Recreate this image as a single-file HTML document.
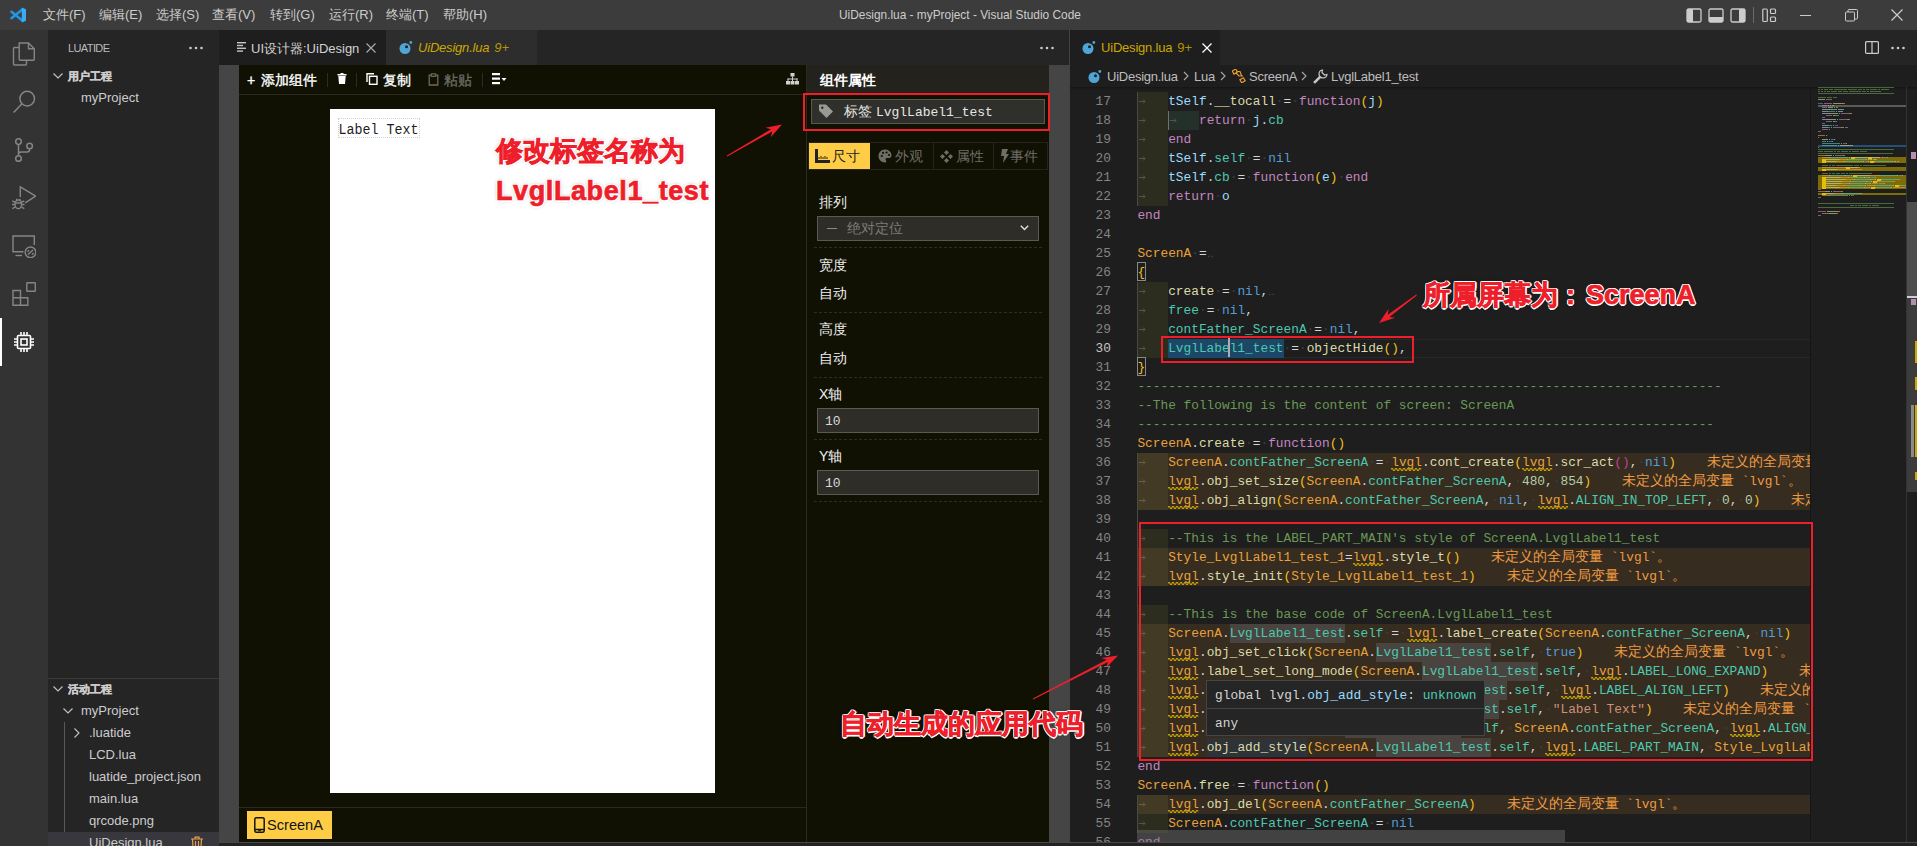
<!DOCTYPE html>
<html><head><meta charset="utf-8">
<style>
*{box-sizing:border-box;margin:0;padding:0}
html,body{width:1917px;height:846px;overflow:hidden;background:#1e1e1e;font-family:"Liberation Sans",sans-serif;font-size:13px;color:#ccc}
.a{position:absolute}
.mono{font-family:"Liberation Mono",monospace}
#title{left:0;top:0;width:1917px;height:30px;background:#3c3c3c}
#act{left:0;top:30px;width:48px;height:816px;background:#333333}
#side{left:48px;top:30px;width:171px;height:816px;background:#252526;overflow:hidden}
#ltabs{left:219px;top:30px;width:850px;height:35px;background:#252526}
#rtabs{left:1070px;top:30px;width:847px;height:35px;background:#252526}
#lstrip{left:219px;top:65px;width:20px;height:781px;background:#454545}
#web{left:239px;top:65px;width:810px;height:777px;background:#101103}
#rstrip{left:1049px;top:65px;width:20px;height:781px;background:#454545}
#divid{left:1069px;top:30px;width:1px;height:816px;background:#444}
#editor{left:1070px;top:65px;width:847px;height:781px;background:#1e1e1e;overflow:hidden}
#bottom{left:219px;top:842px;width:1698px;height:4px;background:#232323;border-top:1px solid #474747}
.menu{top:0;line-height:30px;font-size:13px;color:#cccccc;white-space:nowrap}
.sb{white-space:nowrap}
.sbh{font-size:11px;font-weight:bold;color:#cccccc;-webkit-text-stroke:0.3px #cccccc;line-height:14px;white-space:nowrap}
.sbi{font-size:13px;color:#cccccc;line-height:16px;white-space:nowrap}
.tabt{line-height:35px;font-size:13px;white-space:nowrap}
.wtb{font-size:14px;line-height:16px;white-space:nowrap;-webkit-text-stroke:0.35px currentColor}
.ptab{top:78px;line-height:26px;font-size:14px;white-space:nowrap}
.plab{margin-top:1px;font-size:14px;font-weight:500;color:#f0f0f0;line-height:16px;white-space:nowrap}
.pval{margin-top:1px;font-size:14px;color:#f0f0f0;line-height:16px;white-space:nowrap}
.dash{left:575px;width:228px;height:1px;border-top:1px dashed #2e2d22}
.bc{top:1px;line-height:22px;font-size:13px;color:#bdbdbd;white-space:nowrap;letter-spacing:-0.25px}
.cl{font-family:"Liberation Mono",monospace;font-size:12.825px;line-height:19px;white-space:pre}
.wt{color:#ee9a40}
.cj{font-size:14px}
.ln{left:0;width:41px;text-align:right;font-family:"Liberation Mono",monospace;font-size:12.825px;line-height:19px}
.anno{font-family:"Liberation Sans",sans-serif;font-weight:bold;-webkit-text-stroke:0.7px #ee1f2b;font-size:27px;line-height:36px;color:#ee1f2b;white-space:nowrap;text-shadow:1.5px 0 0 #fff,-1.5px 0 0 #fff,0 1.5px 0 #fff,0 -1.5px 0 #fff,1px 1px 0 #fff,-1px -1px 0 #fff,1px -1px 0 #fff,-1px 1px 0 #fff,0 0 4px rgba(0,0,0,0.35)}
.rbox{border:2px solid #f01e28}
</style></head><body>
<div class="a" id="lstrip"></div>
<div class="a" id="rstrip"></div>
<div class="a" id="divid"></div>
<!-- TITLE BAR -->
<div class="a" id="title">
 <svg class="a" style="left:10px;top:7px" width="17" height="16" viewBox="0 0 17 16"><path d="M12.6 2.2 L1.5 11.2 M12.6 13.8 L1.5 4.8" stroke="#2196e6" stroke-width="2.5" stroke-linecap="round"/><path d="M11.8 0.4 L16 2.2 V13.8 L11.8 15.6 Z" fill="#3aaaf2"/></svg>
 <div class="a menu" style="left:43px">文件(F)</div>
 <div class="a menu" style="left:99px">编辑(E)</div>
 <div class="a menu" style="left:156px">选择(S)</div>
 <div class="a menu" style="left:212px">查看(V)</div>
 <div class="a menu" style="left:270px">转到(G)</div>
 <div class="a menu" style="left:329px">运行(R)</div>
 <div class="a menu" style="left:386px">终端(T)</div>
 <div class="a menu" style="left:443px">帮助(H)</div>
 <div class="a menu" id="wtitle" style="left:839px;transform:scaleX(0.913);transform-origin:0 0">UiDesign.lua - myProject - Visual Studio Code</div>
 <svg class="a" style="left:1686px;top:8px" width="16" height="15" viewBox="0 0 16 15"><rect x="1" y="1" width="14" height="13" rx="1.5" fill="none" stroke="#cccccc" stroke-width="1.3"/><rect x="1" y="1" width="6" height="13" fill="#cccccc"/></svg>
 <svg class="a" style="left:1708px;top:8px" width="16" height="15" viewBox="0 0 16 15"><rect x="1" y="1" width="14" height="13" rx="1.5" fill="none" stroke="#cccccc" stroke-width="1.3"/><rect x="1" y="9" width="14" height="5" fill="#cccccc"/></svg>
 <svg class="a" style="left:1730px;top:8px" width="16" height="15" viewBox="0 0 16 15"><rect x="1" y="1" width="14" height="13" rx="1.5" fill="none" stroke="#cccccc" stroke-width="1.3"/><rect x="9" y="1" width="6" height="13" fill="#cccccc"/></svg>
 <div class="a" style="left:1753px;top:7px;width:1px;height:16px;background:#6a6a6a"></div>
 <svg class="a" style="left:1762px;top:8px" width="15" height="15" viewBox="0 0 15 15" fill="none" stroke="#cccccc" stroke-width="1.2"><rect x="0.8" y="1" width="4.5" height="12.5" rx="1"/><rect x="8.5" y="1" width="5" height="4.5" rx="1"/><rect x="8.5" y="9" width="5" height="4.5" rx="1"/></svg>
 <div class="a" style="left:1800px;top:15px;width:11px;height:1px;background:#cccccc"></div>
 <svg class="a" style="left:1845px;top:9px" width="13" height="13" viewBox="0 0 13 13" fill="none" stroke="#cccccc" stroke-width="1"><rect x="0.5" y="3" width="9" height="9" rx="1"/><path d="M3 3 V1.5 a1 1 0 0 1 1 -1 H11.5 a1 1 0 0 1 1 1 V9 a1 1 0 0 1 -1 1 H9.5"/></svg>
 <svg class="a" style="left:1891px;top:9px" width="12" height="12" viewBox="0 0 12 12" stroke="#cccccc" stroke-width="1.2"><path d="M0.5 0.5 L11.5 11.5 M11.5 0.5 L0.5 11.5"/></svg>
</div>

<!-- ACTIVITY BAR -->
<div class="a" id="act">
 <svg class="a" style="left:12px;top:12px" width="24" height="24" viewBox="0 0 24 24" fill="none" stroke="#858585" stroke-width="1.4"><path d="M7 5.5 H2.5 a1 1 0 0 0 -1 1 V22 a1 1 0 0 0 1 1 H13.5 a1 1 0 0 0 1 -1 V18.5"/><path d="M7.2 1 H16.5 L22.3 6.8 V17.3 a1 1 0 0 1 -1 1 H8.2 a1 1 0 0 1 -1 -1 Z"/><path d="M16.5 1 V6.8 H22.3"/></svg>
 <svg class="a" style="left:12px;top:60px" width="24" height="24" viewBox="0 0 24 24" fill="none" stroke="#858585" stroke-width="1.5"><circle cx="15.2" cy="8.6" r="7.3"/><path d="M10 13.8 L1.6 22.6"/></svg>
 <svg class="a" style="left:12px;top:108px" width="24" height="24" viewBox="0 0 24 24" fill="none" stroke="#858585" stroke-width="1.5"><circle cx="6.5" cy="3.6" r="2.8"/><circle cx="6.5" cy="20.5" r="2.8"/><circle cx="17.6" cy="8" r="2.8"/><path d="M6.5 6.4 V17.7 M17.6 10.8 V11.5 a2.5 2.5 0 0 1 -2.5 2.5 H9 a2.5 2.5 0 0 0 -2.5 2.5"/></svg>
 <svg class="a" style="left:12px;top:156px" width="24" height="24" viewBox="0 0 24 24" fill="none" stroke="#858585" stroke-width="1.4"><path d="M8.3 11 V0.8 L23.6 10.2 L13.2 16.8"/><ellipse cx="6.3" cy="18.3" rx="3.3" ry="4.3"/><path d="M0.3 15 L3 16.2 M0.3 22.6 L3 21.2 M12.3 15 L9.6 16.2 M12.3 22.6 L9.6 21.2 M0 18.5 H3 M9.6 18.5 H12.6 M4.3 12.8 L5.3 14.3 M8.3 12.8 L7.3 14.3 M3.4 17 H9.2"/></svg>
 <svg class="a" style="left:12px;top:204px" width="24" height="24" viewBox="0 0 24 24" fill="none" stroke="#858585" stroke-width="1.4"><path d="M11.5 17.8 H1 V2 H22.3 V11"/><path d="M3.5 21.5 H10"/><circle cx="18.5" cy="18.3" r="5.3"/><path d="M16 20.5 L21 16 M15.5 17.8 L17 16.3 M21.5 19 L20 20.5"/></svg>
 <svg class="a" style="left:12px;top:252px" width="24" height="24" viewBox="0 0 24 24" fill="none" stroke="#858585" stroke-width="1.4"><path d="M1 8.5 H8.5 V15.8 H15.8 V23.3 H1 Z M1 15.8 H8.5 V23.3"/><rect x="14.8" y="0.8" width="8.5" height="8.5" rx="0.5"/></svg>
 <div class="a" style="left:0;top:288px;width:2px;height:48px;background:#ffffff"></div>
 <svg class="a" style="left:12px;top:300px" width="24" height="24" viewBox="0 0 24 24" fill="none" stroke="#ffffff" stroke-width="1.6"><rect x="5.5" y="5.5" width="13" height="13" rx="1"/><rect x="9" y="9" width="6" height="6"/><path d="M9 2 V5.5 M12 2 V5.5 M15 2 V5.5 M9 18.5 V22 M12 18.5 V22 M15 18.5 V22 M2 9 H5.5 M2 12 H5.5 M2 15 H5.5 M18.5 9 H22 M18.5 12 H22 M18.5 15 H22"/></svg>
</div>

<!-- SIDEBAR -->
<div class="a" id="side">
 <div class="a sb" style="left:20px;top:12px;font-size:11px;color:#bbbbbb;letter-spacing:-0.6px;line-height:13px">LUATIDE</div>
 <svg class="a" style="left:141px;top:16px" width="14" height="4" viewBox="0 0 14 4" fill="#cccccc"><circle cx="1.5" cy="2" r="1.3"/><circle cx="7" cy="2" r="1.3"/><circle cx="12.5" cy="2" r="1.3"/></svg>
 <svg class="a chev" style="left:5px;top:41px" width="10" height="10" viewBox="0 0 10 10"><path d="M0.5 2.5 L5 7 L9.5 2.5" fill="none" stroke="#c5c5c5" stroke-width="1.1"/></svg>
 <div class="a sbh" style="left:20px;top:39px">用户工程</div>
 <div class="a sbi" style="left:33px;top:60px">myProject</div>

 <div class="a" style="left:0;top:648px;width:171px;height:1px;background:#3c3c3c"></div>
 <svg class="a chev" style="left:5px;top:654px" width="10" height="10" viewBox="0 0 10 10"><path d="M0.5 2.5 L5 7 L9.5 2.5" fill="none" stroke="#c5c5c5" stroke-width="1.1"/></svg>
 <div class="a sbh" style="left:20px;top:652px">活动工程</div>
 <svg class="a chev" style="left:15px;top:676px" width="10" height="10" viewBox="0 0 10 10"><path d="M0.5 2.5 L5 7 L9.5 2.5" fill="none" stroke="#c5c5c5" stroke-width="1.1"/></svg>
 <div class="a sbi" style="left:33px;top:673px">myProject</div>
 <div class="a" style="left:16px;top:692px;width:1px;height:130px;background:#585858"></div><div class="a" style="left:16px;top:824px;width:1px;height:30px;background:#5d5d62"></div>
 <svg class="a chev" style="left:24px;top:698px" width="10" height="10" viewBox="0 0 10 10"><path d="M2.5 0.5 L7 5 L2.5 9.5" fill="none" stroke="#c5c5c5" stroke-width="1.1"/></svg>
 <div class="a sbi" style="left:41px;top:695px">.luatide</div>
 <div class="a sbi" style="left:41px;top:717px">LCD.lua</div>
 <div class="a sbi" style="left:41px;top:739px">luatide_project.json</div>
 <div class="a sbi" style="left:41px;top:761px">main.lua</div>
 <div class="a sbi" style="left:41px;top:783px">qrcode.png</div>
 <div class="a" style="left:0;top:802px;width:171px;height:22px;background:#37373d"></div>
 <div class="a sbi" style="left:41px;top:805px">UiDesign.lua</div>
 <svg class="a" style="left:142px;top:806px" width="14" height="14" viewBox="0 0 14 14" fill="none" stroke="#e8a050" stroke-width="1.2"><path d="M1 3 H13 M5 3 V1.2 H9 V3 M2.5 3 L3.2 14 M11.5 3 L10.8 14 M5.5 5 V14 M8.5 5 V14"/></svg>
</div>
<!-- LEFT TABS -->
<div class="a" id="ltabs">
 <div class="a" style="left:0;top:0;width:167px;height:35px;background:#1e1e1e"></div>
 <svg class="a" style="left:18px;top:12px" width="10" height="10" viewBox="0 0 10 10" fill="#c5c5c5"><rect x="0" y="0" width="9" height="1.4"/><rect x="0" y="2.8" width="6" height="1.4"/><rect x="0" y="5.6" width="9" height="1.4"/><rect x="0" y="8.4" width="6" height="1.4"/></svg>
 <div class="a tabt" style="left:32px;top:1px;color:#d2d2d2">UI设计器:UiDesign</div>
 <svg class="a" style="left:147px;top:13px" width="10" height="10" viewBox="0 0 10 10" stroke="#a8a8a8" stroke-width="1.2"><path d="M0.5 0.5 L9.5 9.5 M9.5 0.5 L0.5 9.5"/></svg>
 <div class="a" style="left:167px;top:0;width:151px;height:35px;background:#2d2d2d"></div>
 <svg class="a" style="left:180px;top:11px" width="14" height="13" viewBox="0 0 14 13"><circle cx="6" cy="7.5" r="5.5" fill="#4fa5d6"/><circle cx="7.5" cy="5.8" r="1.5" fill="#1e1e1e"/><circle cx="11.8" cy="1.5" r="1.4" fill="#4fa5d6"/></svg>
 <div class="a tabt" style="left:199px;top:0;color:#cca700;font-style:italic"><span style="letter-spacing:-0.2px">UiDesign.lua</span><span style="margin-left:5px;opacity:0.85">9+</span></div>
 <svg class="a" style="left:821px;top:16px" width="14" height="4" viewBox="0 0 14 4" fill="#cccccc"><circle cx="1.5" cy="2" r="1.3"/><circle cx="7" cy="2" r="1.3"/><circle cx="12.5" cy="2" r="1.3"/></svg>
</div>

<!-- WEBVIEW -->
<div class="a" id="web">
 <!-- toolbar -->
 <div class="a" style="left:0;top:29px;width:567px;height:1px;background:#2b2a20"></div>
 <div class="a wtb" style="left:8px;top:7px;color:#fff">+</div>
 <div class="a wtb" style="left:22px;top:7px;color:#fff">添加组件</div>
 <div class="a" style="left:88px;top:8px;width:1px;height:14px;background:#2e2d25"></div>
 <svg class="a" style="left:98px;top:8px" width="10" height="11" viewBox="0 0 10 11" fill="#ffffff"><rect x="0.5" y="1" width="9" height="1.5"/><rect x="3.5" y="0" width="3" height="1.5"/><path d="M1.3 3 H8.7 L8 11 H2 Z"/></svg>
 <div class="a" style="left:117px;top:8px;width:1px;height:14px;background:#2e2d25"></div>
 <svg class="a" style="left:127px;top:8px" width="12" height="12" viewBox="0 0 12 12" fill="none" stroke="#ffffff" stroke-width="1.4"><path d="M1 9 V0.8 H8"/><rect x="3.5" y="3.3" width="7.5" height="8"/></svg>
 <div class="a wtb" style="left:144px;top:7px;color:#fff">复制</div>
 <svg class="a" style="left:189px;top:8px" width="11" height="13" viewBox="0 0 11 13" fill="none" stroke="#6b6b60" stroke-width="1.3"><path d="M3 2.2 H1.2 V12 H9.8 V2.2 H8"/><rect x="3.2" y="0.8" width="4.6" height="2.6" rx="0.6"/></svg>
 <div class="a wtb" style="left:205px;top:7px;color:#6b6b60">粘贴</div>
 <div class="a" style="left:243px;top:8px;width:1px;height:14px;background:#2e2d25"></div>
 <svg class="a" style="left:253px;top:8px" width="15" height="12" viewBox="0 0 15 12" fill="#ffffff"><rect x="0" y="0" width="8" height="2.2"/><rect x="0" y="4.5" width="8" height="2.2"/><rect x="0" y="9" width="8" height="2.2"/><path d="M9.5 5 H14.5 L12 8 Z"/></svg>
 <svg class="a" style="left:547px;top:8px" width="13" height="12" viewBox="0 0 13 12" fill="#d0d0d0"><rect x="4.5" y="0" width="4" height="3.5"/><rect x="6" y="3.5" width="1" height="2.5"/><rect x="1.5" y="5.5" width="10" height="1"/><rect x="1.5" y="5.5" width="1" height="2.5"/><rect x="10.5" y="5.5" width="1" height="2.5"/><rect x="6" y="5.5" width="1" height="2.5"/><rect x="0" y="8" width="4" height="3.5"/><rect x="4.5" y="8" width="4" height="3.5"/><rect x="9" y="8" width="4" height="3.5"/></svg>
 <!-- canvas -->
 <div class="a" style="left:91px;top:44px;width:385px;height:684px;background:#ffffff"></div>
 <div class="a" style="left:99px;top:53px;width:82px;height:20px;border:1px dotted #cfcfcf"></div>
 <div class="a mono" style="left:99.5px;top:59px;font-size:13.35px;color:#1e1e1e;line-height:16px;transform:scaleY(1.15);transform-origin:0 100%">Label Text</div>
 <!-- bottom bar -->
 <div class="a" style="left:0;top:742px;width:567px;height:1px;background:#2b2a20"></div>
 <div class="a" style="left:8px;top:746px;width:85px;height:28px;background:#fecd45"></div>
 <svg class="a" style="left:15px;top:752px" width="11" height="16" viewBox="0 0 11 16" fill="none" stroke="#141414" stroke-width="1.5"><rect x="0.8" y="0.8" width="9.4" height="14.4" rx="1.5"/><path d="M0.8 12.5 H10.2" /><rect x="4" y="13.2" width="3" height="1" fill="#141414" stroke="none"/></svg>
 <div class="a" style="left:28px;top:746px;line-height:28px;font-size:14.6px;color:#141414">ScreenA</div>

 <!-- properties panel -->
 <div class="a" style="left:567px;top:0;width:1px;height:777px;background:#2b2a20"></div>
 <div class="a" style="left:568px;top:0;width:242px;height:29px;background:#23221c"></div>
 <div class="a wtb" style="left:581px;top:7px;color:#fff;font-weight:bold;-webkit-text-stroke:0">组件属性</div>
 <div class="a" style="left:572px;top:34px;width:234px;height:25px;background:#2f2f2b;border:1px solid #58584f"></div>
 <svg class="a" style="left:579px;top:38px" width="16" height="16" viewBox="0 0 16 16" fill="#9a9a95"><path d="M1 1.5 H8 L15 8.5 L8.5 15 L1 7.5 Z"/><circle cx="4.3" cy="4.8" r="1.3" fill="#2f2f2b"/></svg>
 <div class="a" style="left:605px;top:34px;line-height:25px;font-size:14px;color:#e6e6e6">标签 <span class="mono" style="font-size:13px">LvglLabel1_test</span></div>
 <!-- tabs -->
 <div class="a" style="left:569px;top:77px;width:240px;height:28px;border:1px solid #25241c"></div>
 <div class="a" style="left:570px;top:78px;width:61px;height:26px;background:#fecd45"></div>
 <div class="a" style="left:694px;top:78px;width:1px;height:26px;background:#25241c"></div>
 <div class="a" style="left:754px;top:78px;width:1px;height:26px;background:#25241c"></div>
 <svg class="a" style="left:576px;top:84px" width="15" height="14" viewBox="0 0 15 14" fill="#222"><path d="M0 0 H3 V11 H15 V14 H0 Z"/><path d="M4 10 V8 M6 10 V7 M8 10 V8 M10 10 V7 M12 10 V8" stroke="#222" stroke-width="1"/></svg>
 <div class="a ptab" style="left:593px;color:#222">尺寸</div>
 <svg class="a" style="left:639px;top:84px" width="14" height="14" viewBox="0 0 14 14" fill="#6e6e66"><path d="M7 0.5 C3 0.5 0.5 3.5 0.5 7 C0.5 10.5 3 13.5 7 13.5 C8.5 13.5 8.5 12 7.8 11 C7 10 7.8 9 9 9 H11 C12.5 9 13.5 8 13.5 6.5 C13.5 3 10.5 0.5 7 0.5 Z"/><circle cx="3.8" cy="7" r="1.1" fill="#0f0f06"/><circle cx="5" cy="3.8" r="1.1" fill="#0f0f06"/><circle cx="8.5" cy="3.5" r="1.1" fill="#0f0f06"/><circle cx="11" cy="6" r="1.1" fill="#0f0f06"/></svg>
 <div class="a ptab" style="left:656px;color:#6e6e66">外观</div>
 <svg class="a" style="left:701px;top:85px" width="13" height="13" viewBox="0 0 13 13" fill="#6e6e66"><path d="M6.5 0 L9 2.5 L6.5 5 L4 2.5 Z M6.5 8 L9 10.5 L6.5 13 L4 10.5 Z M0 6.5 L2.5 4 L5 6.5 L2.5 9 Z M8 6.5 L10.5 4 L13 6.5 L10.5 9 Z"/></svg>
 <div class="a ptab" style="left:717px;color:#6e6e66">属性</div>
 <svg class="a" style="left:761px;top:84px" width="10" height="14" viewBox="0 0 10 14" fill="#6e6e66"><path d="M2 0 H8 L6 5 H9 L3 14 L4 7 H1 Z"/></svg>
 <div class="a ptab" style="left:771px;color:#6e6e66">事件</div>
 <!-- fields -->
 <div class="a plab" style="left:580px;top:128px">排列</div>
 <div class="a" style="left:578px;top:151px;width:222px;height:25px;background:#2e2d28;border:1px solid #5a5a55"></div>
 <div class="a" style="left:588px;top:163px;width:10px;height:1px;background:#8a8a85"></div>
 <div class="a" style="left:608px;top:151px;line-height:25px;font-size:14px;color:#7c7c77">绝对定位</div>
 <svg class="a" style="left:781px;top:160px" width="9" height="6" viewBox="0 0 9 6"><path d="M0.8 0.8 L4.5 4.5 L8.2 0.8" fill="none" stroke="#dddddd" stroke-width="1.5"/></svg>
 <div class="a dash" style="top:182px"></div>
 <div class="a plab" style="left:580px;top:191px">宽度</div>
 <div class="a pval" style="left:580px;top:219px">自动</div>
 <div class="a dash" style="top:247px"></div>
 <div class="a plab" style="left:580px;top:255px">高度</div>
 <div class="a pval" style="left:580px;top:284px">自动</div>
 <div class="a dash" style="top:312px"></div>
 <div class="a plab" style="left:580px;top:320px">X轴</div>
 <div class="a" style="left:578px;top:343px;width:222px;height:25px;background:#2e2d28;border:1px solid #5a5a55"></div>
 <div class="a mono" style="left:586px;top:344px;line-height:25px;font-size:13px;color:#d8d8d8">10</div>
 <div class="a dash" style="top:374px"></div>
 <div class="a plab" style="left:580px;top:382px">Y轴</div>
 <div class="a" style="left:578px;top:405px;width:222px;height:25px;background:#2e2d28;border:1px solid #5a5a55"></div>
 <div class="a mono" style="left:586px;top:406px;line-height:25px;font-size:13px;color:#d8d8d8">10</div>
 <div class="a dash" style="top:436px"></div>
</div>
<!-- RIGHT TABS -->
<div class="a" id="rtabs">
 <div class="a" style="left:0;top:0;width:150px;height:35px;background:#1e1e1e"></div>
 <svg class="a" style="left:12px;top:11px" width="14" height="13" viewBox="0 0 14 13"><circle cx="6" cy="7.5" r="5.5" fill="#4fa5d6"/><circle cx="7.5" cy="5.8" r="1.5" fill="#1e1e1e"/><circle cx="11.8" cy="1.5" r="1.4" fill="#4fa5d6"/></svg>
 <div class="a tabt" style="left:31px;top:0;color:#cca700"><span style="letter-spacing:-0.2px">UiDesign.lua</span><span style="margin-left:5px;opacity:0.85">9+</span></div>
 <svg class="a" style="left:132px;top:13px" width="10" height="10" viewBox="0 0 10 10" stroke="#ffffff" stroke-width="1.3"><path d="M0.5 0.5 L9.5 9.5 M9.5 0.5 L0.5 9.5"/></svg>
 <svg class="a" style="left:795px;top:11px" width="14" height="13" viewBox="0 0 14 13" fill="none" stroke="#cccccc" stroke-width="1.2"><rect x="0.6" y="0.6" width="12.8" height="11.8" rx="1"/><path d="M7 0.6 V12.4"/></svg>
 <svg class="a" style="left:821px;top:16px" width="14" height="4" viewBox="0 0 14 4" fill="#cccccc"><circle cx="1.5" cy="2" r="1.3"/><circle cx="7" cy="2" r="1.3"/><circle cx="12.5" cy="2" r="1.3"/></svg>
</div>

<!-- EDITOR -->
<div class="a" id="editor">
 <!-- breadcrumbs -->
 <svg class="a" style="left:18px;top:5px" width="14" height="13" viewBox="0 0 14 13"><circle cx="6" cy="7.5" r="5.5" fill="#4fa5d6"/><circle cx="7.5" cy="5.8" r="1.5" fill="#1e1e1e"/><circle cx="11.8" cy="1.5" r="1.4" fill="#4fa5d6"/></svg>
 <div class="a bc" style="left:37px">UiDesign.lua</div>
 <svg class="a" style="left:113px;top:6px" width="6" height="10" viewBox="0 0 6 10"><path d="M1 1 L5 5 L1 9" fill="none" stroke="#a9a9a9" stroke-width="1.1"/></svg>
 <div class="a bc" style="left:124px">Lua</div>
 <svg class="a" style="left:150px;top:6px" width="6" height="10" viewBox="0 0 6 10"><path d="M1 1 L5 5 L1 9" fill="none" stroke="#a9a9a9" stroke-width="1.1"/></svg>
 <svg class="a" style="left:162px;top:4px" width="14" height="14" viewBox="0 0 14 14" fill="none" stroke="#ee9d28" stroke-width="1.2"><rect x="0.8" y="0.8" width="4" height="3.5" transform="rotate(-30 2.8 2.5)"/><rect x="8.5" y="9.5" width="4" height="3.5" transform="rotate(-30 10.5 11.2)"/><path d="M4 4 L7 7 H11 M4.5 2.5 H8 L9.5 6.5"/></svg>
 <div class="a bc" style="left:179px">ScreenA</div>
 <svg class="a" style="left:231px;top:6px" width="6" height="10" viewBox="0 0 6 10"><path d="M1 1 L5 5 L1 9" fill="none" stroke="#a9a9a9" stroke-width="1.1"/></svg>
 <svg class="a" style="left:243px;top:4px" width="15" height="15" viewBox="0 0 15 15" fill="none" stroke="#c5c5c5" stroke-width="1.2"><path d="M1.5 13.5 L7 8 M9.5 1 A4 4 0 1 0 14 5.5 L11.5 6 L9 3.5 Z"/><path d="M1 13 L2 14 L7.5 8.5 L6.5 7.5 Z"/></svg>
 <div class="a bc" style="left:261px">LvglLabel1_test</div>
 <div class="a" style="left:0;top:22px;width:847px;height:3px;background:linear-gradient(#141414,rgba(30,30,30,0))"></div>
 <!-- indent guide -->
 
 <!-- code -->
 <div class="a" id="codewrap" style="left:0;top:0;width:740px;height:777px;overflow:hidden">
<div class="a" style="left:67.40px;top:27px;width:30.78px;height:19px;background:#2c2c1f"></div>
<svg class="a" style="left:69.40px;top:34px" width="7" height="5" viewBox="0 0 7 5"><path d="M0 2.5 H6 M4 0.5 L6 2.5 L4 4.5" fill="none" stroke="#5a5a48" stroke-width="0.9"/></svg>
<div class="a cl" style="left:98.18px;top:27px"><span style="color:#9cdcfe">tSelf</span><span style="color:#d4d4d4">.</span><span style="color:#dcdcaa">__tocall</span><span style="color:#3e3e3e">·</span><span style="color:#d4d4d4">=</span><span style="color:#3e3e3e">·</span><span style="color:#c586c0">function</span><span style="color:#f2c01e">(</span><span style="color:#9cdcfe">j</span><span style="color:#f2c01e">)</span></div>
<div class="a ln" style="top:27px;color:#858585">17</div>
<div class="a" style="left:67.40px;top:46px;width:30.78px;height:19px;background:#2c2c1f"></div>
<svg class="a" style="left:69.40px;top:53px" width="7" height="5" viewBox="0 0 7 5"><path d="M0 2.5 H6 M4 0.5 L6 2.5 L4 4.5" fill="none" stroke="#5a5a48" stroke-width="0.9"/></svg>
<div class="a" style="left:98.18px;top:46px;width:30.78px;height:19px;background:#24302a"></div>
<svg class="a" style="left:100.18px;top:53px" width="7" height="5" viewBox="0 0 7 5"><path d="M0 2.5 H6 M4 0.5 L6 2.5 L4 4.5" fill="none" stroke="#5a5a48" stroke-width="0.9"/></svg>
<div class="a cl" style="left:128.96px;top:46px"><span style="color:#c586c0">return</span><span style="color:#3e3e3e">·</span><span style="color:#9cdcfe">j</span><span style="color:#d4d4d4">.</span><span style="color:#4ec9b0">cb</span></div>
<div class="a ln" style="top:46px;color:#858585">18</div>
<div class="a" style="left:67.40px;top:65px;width:30.78px;height:19px;background:#2c2c1f"></div>
<svg class="a" style="left:69.40px;top:72px" width="7" height="5" viewBox="0 0 7 5"><path d="M0 2.5 H6 M4 0.5 L6 2.5 L4 4.5" fill="none" stroke="#5a5a48" stroke-width="0.9"/></svg>
<div class="a cl" style="left:98.18px;top:65px"><span style="color:#c586c0">end</span></div>
<div class="a ln" style="top:65px;color:#858585">19</div>
<div class="a" style="left:67.40px;top:84px;width:30.78px;height:19px;background:#2c2c1f"></div>
<svg class="a" style="left:69.40px;top:91px" width="7" height="5" viewBox="0 0 7 5"><path d="M0 2.5 H6 M4 0.5 L6 2.5 L4 4.5" fill="none" stroke="#5a5a48" stroke-width="0.9"/></svg>
<div class="a cl" style="left:98.18px;top:84px"><span style="color:#9cdcfe">tSelf</span><span style="color:#d4d4d4">.</span><span style="color:#4ec9b0">self</span><span style="color:#3e3e3e">·</span><span style="color:#d4d4d4">=</span><span style="color:#3e3e3e">·</span><span style="color:#569cd6">nil</span></div>
<div class="a ln" style="top:84px;color:#858585">20</div>
<div class="a" style="left:67.40px;top:103px;width:30.78px;height:19px;background:#2c2c1f"></div>
<svg class="a" style="left:69.40px;top:110px" width="7" height="5" viewBox="0 0 7 5"><path d="M0 2.5 H6 M4 0.5 L6 2.5 L4 4.5" fill="none" stroke="#5a5a48" stroke-width="0.9"/></svg>
<div class="a cl" style="left:98.18px;top:103px"><span style="color:#9cdcfe">tSelf</span><span style="color:#d4d4d4">.</span><span style="color:#4ec9b0">cb</span><span style="color:#3e3e3e">·</span><span style="color:#d4d4d4">=</span><span style="color:#3e3e3e">·</span><span style="color:#c586c0">function</span><span style="color:#f2c01e">(</span><span style="color:#9cdcfe">e</span><span style="color:#f2c01e">)</span><span style="color:#3e3e3e">·</span><span style="color:#c586c0">end</span></div>
<div class="a ln" style="top:103px;color:#858585">21</div>
<div class="a" style="left:67.40px;top:122px;width:30.78px;height:19px;background:#2c2c1f"></div>
<svg class="a" style="left:69.40px;top:129px" width="7" height="5" viewBox="0 0 7 5"><path d="M0 2.5 H6 M4 0.5 L6 2.5 L4 4.5" fill="none" stroke="#5a5a48" stroke-width="0.9"/></svg>
<div class="a cl" style="left:98.18px;top:122px"><span style="color:#c586c0">return</span><span style="color:#3e3e3e">·</span><span style="color:#9cdcfe">o</span></div>
<div class="a ln" style="top:122px;color:#858585">22</div>
<div class="a cl" style="left:67.40px;top:141px"><span style="color:#c586c0">end</span></div>
<div class="a ln" style="top:141px;color:#858585">23</div>
<div class="a cl" style="left:67.40px;top:160px"></div>
<div class="a ln" style="top:160px;color:#858585">24</div>
<div class="a cl" style="left:67.40px;top:179px"><span style="color:#e9a23b">ScreenA</span><span style="color:#3e3e3e">·</span><span style="color:#d4d4d4">=</span><span style="color:#3e3e3e">‥</span></div>
<div class="a ln" style="top:179px;color:#858585">25</div>
<div class="a cl" style="left:67.40px;top:198px"><span style="color:#f2c01e">{</span></div>
<div class="a ln" style="top:198px;color:#858585">26</div>
<div class="a" style="left:67.40px;top:217px;width:30.78px;height:19px;background:#2c2c1f"></div>
<svg class="a" style="left:69.40px;top:224px" width="7" height="5" viewBox="0 0 7 5"><path d="M0 2.5 H6 M4 0.5 L6 2.5 L4 4.5" fill="none" stroke="#5a5a48" stroke-width="0.9"/></svg>
<div class="a cl" style="left:98.18px;top:217px"><span style="color:#dcdcaa">create</span><span style="color:#3e3e3e">·</span><span style="color:#d4d4d4">=</span><span style="color:#3e3e3e">·</span><span style="color:#569cd6">nil</span><span style="color:#d4d4d4">,</span><span style="color:#3e3e3e">‥</span></div>
<div class="a ln" style="top:217px;color:#858585">27</div>
<div class="a" style="left:67.40px;top:236px;width:30.78px;height:19px;background:#2c2c1f"></div>
<svg class="a" style="left:69.40px;top:243px" width="7" height="5" viewBox="0 0 7 5"><path d="M0 2.5 H6 M4 0.5 L6 2.5 L4 4.5" fill="none" stroke="#5a5a48" stroke-width="0.9"/></svg>
<div class="a cl" style="left:98.18px;top:236px"><span style="color:#4ec9b0">free</span><span style="color:#3e3e3e">·</span><span style="color:#d4d4d4">=</span><span style="color:#3e3e3e">·</span><span style="color:#569cd6">nil</span><span style="color:#d4d4d4">,</span></div>
<div class="a ln" style="top:236px;color:#858585">28</div>
<div class="a" style="left:67.40px;top:255px;width:30.78px;height:19px;background:#2c2c1f"></div>
<svg class="a" style="left:69.40px;top:262px" width="7" height="5" viewBox="0 0 7 5"><path d="M0 2.5 H6 M4 0.5 L6 2.5 L4 4.5" fill="none" stroke="#5a5a48" stroke-width="0.9"/></svg>
<div class="a cl" style="left:98.18px;top:255px"><span style="color:#4ec9b0">contFather_ScreenA</span><span style="color:#3e3e3e">·</span><span style="color:#d4d4d4">=</span><span style="color:#3e3e3e">·</span><span style="color:#569cd6">nil</span><span style="color:#d4d4d4">,</span></div>
<div class="a ln" style="top:255px;color:#858585">29</div>
<div class="a" style="left:67.4px;top:274px;width:672.6px;height:19px;border-top:1px solid #282828;border-bottom:1px solid #282828"></div>
<div class="a" style="left:67.40px;top:274px;width:30.78px;height:19px;background:#2c2c1f"></div>
<svg class="a" style="left:69.40px;top:281px" width="7" height="5" viewBox="0 0 7 5"><path d="M0 2.5 H6 M4 0.5 L6 2.5 L4 4.5" fill="none" stroke="#5a5a48" stroke-width="0.9"/></svg>
<div class="a" style="left:98.18px;top:274px;width:115.43px;height:19px;background:#1c4766"></div>
<div class="a cl" style="left:98.18px;top:274px"><span style="color:#4ec9b0">LvglLabel1_test</span><span style="color:#3e3e3e">·</span><span style="color:#d4d4d4">=</span><span style="color:#3e3e3e">·</span><span style="color:#dcdcaa">objectHide</span><span style="color:#f2c01e">(</span><span style="color:#f2c01e">)</span><span style="color:#d4d4d4">,</span></div>
<div class="a ln" style="top:274px;color:#c6c6c6">30</div>
<div class="a cl" style="left:67.40px;top:293px"><span style="color:#f2c01e">}</span></div>
<div class="a ln" style="top:293px;color:#858585">31</div>
<div class="a cl" style="left:67.40px;top:312px"><span style="color:#6a9955">----------------------------------------------------------------------------</span></div>
<div class="a ln" style="top:312px;color:#858585">32</div>
<div class="a cl" style="left:67.40px;top:331px"><span style="color:#6a9955">--The following is the content of screen: ScreenA</span></div>
<div class="a ln" style="top:331px;color:#858585">33</div>
<div class="a cl" style="left:67.40px;top:350px"><span style="color:#6a9955">---------------------------------------------------------------------------</span></div>
<div class="a ln" style="top:350px;color:#858585">34</div>
<div class="a cl" style="left:67.40px;top:369px"><span style="color:#e9a23b">ScreenA</span><span style="color:#d4d4d4">.</span><span style="color:#dcdcaa">create</span><span style="color:#3e3e3e">·</span><span style="color:#d4d4d4">=</span><span style="color:#3e3e3e">·</span><span style="color:#c586c0">function</span><span style="color:#f2c01e">(</span><span style="color:#f2c01e">)</span></div>
<div class="a ln" style="top:369px;color:#858585">35</div>
<div class="a" style="left:67.4px;top:388px;width:672.6px;height:19px;background:#362c20"></div>
<div class="a" style="left:67.40px;top:388px;width:30.78px;height:19px;background:#433a26"></div>
<svg class="a" style="left:69.40px;top:395px" width="7" height="5" viewBox="0 0 7 5"><path d="M0 2.5 H6 M4 0.5 L6 2.5 L4 4.5" fill="none" stroke="#6e6248" stroke-width="0.9"/></svg>
<div class="a cl" style="left:98.18px;top:388px"><span style="color:#e9a23b">ScreenA</span><span style="color:#d4d4d4">.</span><span style="color:#4ec9b0">contFather_ScreenA</span><span style="color:#3e3e3e">·</span><span style="color:#d4d4d4">=</span><span style="color:#3e3e3e">·</span><span style="color:#e9a23b">lvgl</span><span style="color:#d4d4d4">.</span><span style="color:#dcdcaa">cont_create</span><span style="color:#f2c01e">(</span><span style="color:#e9a23b">lvgl</span><span style="color:#d4d4d4">.</span><span style="color:#dcdcaa">scr_act</span><span style="color:#c8408a">(</span><span style="color:#c8408a">)</span><span style="color:#d4d4d4">,</span><span style="color:#3e3e3e">·</span><span style="color:#569cd6">nil</span><span style="color:#f2c01e">)</span><span class="wt">    <span class="cj">未定义的全局变量</span> `lvgl`<span class="cj">。</span></span></div>
<svg class="a" style="left:321.34px;top:403px" width="30.8" height="3" viewBox="0 0 30.8 3"><path d="M0 1.5 Q1 -1 2 1.5 Q3 4 4 1.5 Q5 -1 6 1.5 Q7 4 8 1.5 Q9 -1 10 1.5 Q11 4 12 1.5 Q13 -1 14 1.5 Q15 4 16 1.5 Q17 -1 18 1.5 Q19 4 20 1.5 Q21 -1 22 1.5 Q23 4 24 1.5 Q25 -1 26 1.5 Q27 4 28 1.5 Q29 -1 30 1.5" fill="none" stroke="#cca700" stroke-width="1.1"/></svg>
<svg class="a" style="left:452.16px;top:403px" width="30.8" height="3" viewBox="0 0 30.8 3"><path d="M0 1.5 Q1 -1 2 1.5 Q3 4 4 1.5 Q5 -1 6 1.5 Q7 4 8 1.5 Q9 -1 10 1.5 Q11 4 12 1.5 Q13 -1 14 1.5 Q15 4 16 1.5 Q17 -1 18 1.5 Q19 4 20 1.5 Q21 -1 22 1.5 Q23 4 24 1.5 Q25 -1 26 1.5 Q27 4 28 1.5 Q29 -1 30 1.5" fill="none" stroke="#cca700" stroke-width="1.1"/></svg>
<div class="a ln" style="top:388px;color:#858585">36</div>
<div class="a" style="left:67.4px;top:407px;width:672.6px;height:19px;background:#362c20"></div>
<div class="a" style="left:67.40px;top:407px;width:30.78px;height:19px;background:#433a26"></div>
<svg class="a" style="left:69.40px;top:414px" width="7" height="5" viewBox="0 0 7 5"><path d="M0 2.5 H6 M4 0.5 L6 2.5 L4 4.5" fill="none" stroke="#6e6248" stroke-width="0.9"/></svg>
<div class="a cl" style="left:98.18px;top:407px"><span style="color:#e9a23b">lvgl</span><span style="color:#d4d4d4">.</span><span style="color:#dcdcaa">obj_set_size</span><span style="color:#f2c01e">(</span><span style="color:#e9a23b">ScreenA</span><span style="color:#d4d4d4">.</span><span style="color:#4ec9b0">contFather_ScreenA</span><span style="color:#d4d4d4">,</span><span style="color:#3e3e3e">·</span><span style="color:#b5cea8">480</span><span style="color:#d4d4d4">,</span><span style="color:#3e3e3e">·</span><span style="color:#b5cea8">854</span><span style="color:#f2c01e">)</span><span class="wt">    <span class="cj">未定义的全局变量</span> `lvgl`<span class="cj">。</span></span></div>
<svg class="a" style="left:98.18px;top:422px" width="30.8" height="3" viewBox="0 0 30.8 3"><path d="M0 1.5 Q1 -1 2 1.5 Q3 4 4 1.5 Q5 -1 6 1.5 Q7 4 8 1.5 Q9 -1 10 1.5 Q11 4 12 1.5 Q13 -1 14 1.5 Q15 4 16 1.5 Q17 -1 18 1.5 Q19 4 20 1.5 Q21 -1 22 1.5 Q23 4 24 1.5 Q25 -1 26 1.5 Q27 4 28 1.5 Q29 -1 30 1.5" fill="none" stroke="#cca700" stroke-width="1.1"/></svg>
<div class="a ln" style="top:407px;color:#858585">37</div>
<div class="a" style="left:67.4px;top:426px;width:672.6px;height:19px;background:#362c20"></div>
<div class="a" style="left:67.40px;top:426px;width:30.78px;height:19px;background:#433a26"></div>
<svg class="a" style="left:69.40px;top:433px" width="7" height="5" viewBox="0 0 7 5"><path d="M0 2.5 H6 M4 0.5 L6 2.5 L4 4.5" fill="none" stroke="#6e6248" stroke-width="0.9"/></svg>
<div class="a cl" style="left:98.18px;top:426px"><span style="color:#e9a23b">lvgl</span><span style="color:#d4d4d4">.</span><span style="color:#dcdcaa">obj_align</span><span style="color:#f2c01e">(</span><span style="color:#e9a23b">ScreenA</span><span style="color:#d4d4d4">.</span><span style="color:#4ec9b0">contFather_ScreenA</span><span style="color:#d4d4d4">,</span><span style="color:#3e3e3e">·</span><span style="color:#569cd6">nil</span><span style="color:#d4d4d4">,</span><span style="color:#3e3e3e">·</span><span style="color:#e9a23b">lvgl</span><span style="color:#d4d4d4">.</span><span style="color:#4ec9b0">ALIGN_IN_TOP_LEFT</span><span style="color:#d4d4d4">,</span><span style="color:#3e3e3e">·</span><span style="color:#b5cea8">0</span><span style="color:#d4d4d4">,</span><span style="color:#3e3e3e">·</span><span style="color:#b5cea8">0</span><span style="color:#f2c01e">)</span><span class="wt">    <span class="cj">未定义的全局变量</span> `lvgl`<span class="cj">。</span></span></div>
<svg class="a" style="left:98.18px;top:441px" width="30.8" height="3" viewBox="0 0 30.8 3"><path d="M0 1.5 Q1 -1 2 1.5 Q3 4 4 1.5 Q5 -1 6 1.5 Q7 4 8 1.5 Q9 -1 10 1.5 Q11 4 12 1.5 Q13 -1 14 1.5 Q15 4 16 1.5 Q17 -1 18 1.5 Q19 4 20 1.5 Q21 -1 22 1.5 Q23 4 24 1.5 Q25 -1 26 1.5 Q27 4 28 1.5 Q29 -1 30 1.5" fill="none" stroke="#cca700" stroke-width="1.1"/></svg>
<svg class="a" style="left:467.56px;top:441px" width="30.8" height="3" viewBox="0 0 30.8 3"><path d="M0 1.5 Q1 -1 2 1.5 Q3 4 4 1.5 Q5 -1 6 1.5 Q7 4 8 1.5 Q9 -1 10 1.5 Q11 4 12 1.5 Q13 -1 14 1.5 Q15 4 16 1.5 Q17 -1 18 1.5 Q19 4 20 1.5 Q21 -1 22 1.5 Q23 4 24 1.5 Q25 -1 26 1.5 Q27 4 28 1.5 Q29 -1 30 1.5" fill="none" stroke="#cca700" stroke-width="1.1"/></svg>
<div class="a ln" style="top:426px;color:#858585">38</div>
<div class="a cl" style="left:67.40px;top:445px"></div>
<div class="a ln" style="top:445px;color:#858585">39</div>
<div class="a" style="left:67.40px;top:464px;width:30.78px;height:19px;background:#2c2c1f"></div>
<svg class="a" style="left:69.40px;top:471px" width="7" height="5" viewBox="0 0 7 5"><path d="M0 2.5 H6 M4 0.5 L6 2.5 L4 4.5" fill="none" stroke="#5a5a48" stroke-width="0.9"/></svg>
<div class="a cl" style="left:98.18px;top:464px"><span style="color:#6a9955">--This is the LABEL_PART_MAIN&#x27;s style of ScreenA.LvglLabel1_test</span></div>
<div class="a ln" style="top:464px;color:#858585">40</div>
<div class="a" style="left:67.4px;top:483px;width:672.6px;height:19px;background:#362c20"></div>
<div class="a" style="left:67.40px;top:483px;width:30.78px;height:19px;background:#433a26"></div>
<svg class="a" style="left:69.40px;top:490px" width="7" height="5" viewBox="0 0 7 5"><path d="M0 2.5 H6 M4 0.5 L6 2.5 L4 4.5" fill="none" stroke="#6e6248" stroke-width="0.9"/></svg>
<div class="a cl" style="left:98.18px;top:483px"><span style="color:#e9a23b">Style_LvglLabel1_test_1</span><span style="color:#d4d4d4">=</span><span style="color:#e9a23b">lvgl</span><span style="color:#d4d4d4">.</span><span style="color:#dcdcaa">style_t</span><span style="color:#f2c01e">(</span><span style="color:#f2c01e">)</span><span class="wt">    <span class="cj">未定义的全局变量</span> `lvgl`<span class="cj">。</span></span></div>
<svg class="a" style="left:282.87px;top:498px" width="30.8" height="3" viewBox="0 0 30.8 3"><path d="M0 1.5 Q1 -1 2 1.5 Q3 4 4 1.5 Q5 -1 6 1.5 Q7 4 8 1.5 Q9 -1 10 1.5 Q11 4 12 1.5 Q13 -1 14 1.5 Q15 4 16 1.5 Q17 -1 18 1.5 Q19 4 20 1.5 Q21 -1 22 1.5 Q23 4 24 1.5 Q25 -1 26 1.5 Q27 4 28 1.5 Q29 -1 30 1.5" fill="none" stroke="#cca700" stroke-width="1.1"/></svg>
<div class="a ln" style="top:483px;color:#858585">41</div>
<div class="a" style="left:67.4px;top:502px;width:672.6px;height:19px;background:#362c20"></div>
<div class="a" style="left:67.40px;top:502px;width:30.78px;height:19px;background:#433a26"></div>
<svg class="a" style="left:69.40px;top:509px" width="7" height="5" viewBox="0 0 7 5"><path d="M0 2.5 H6 M4 0.5 L6 2.5 L4 4.5" fill="none" stroke="#6e6248" stroke-width="0.9"/></svg>
<div class="a cl" style="left:98.18px;top:502px"><span style="color:#e9a23b">lvgl</span><span style="color:#d4d4d4">.</span><span style="color:#dcdcaa">style_init</span><span style="color:#f2c01e">(</span><span style="color:#e9a23b">Style_LvglLabel1_test_1</span><span style="color:#f2c01e">)</span><span class="wt">    <span class="cj">未定义的全局变量</span> `lvgl`<span class="cj">。</span></span></div>
<svg class="a" style="left:98.18px;top:517px" width="30.8" height="3" viewBox="0 0 30.8 3"><path d="M0 1.5 Q1 -1 2 1.5 Q3 4 4 1.5 Q5 -1 6 1.5 Q7 4 8 1.5 Q9 -1 10 1.5 Q11 4 12 1.5 Q13 -1 14 1.5 Q15 4 16 1.5 Q17 -1 18 1.5 Q19 4 20 1.5 Q21 -1 22 1.5 Q23 4 24 1.5 Q25 -1 26 1.5 Q27 4 28 1.5 Q29 -1 30 1.5" fill="none" stroke="#cca700" stroke-width="1.1"/></svg>
<div class="a ln" style="top:502px;color:#858585">42</div>
<div class="a cl" style="left:67.40px;top:521px"></div>
<div class="a ln" style="top:521px;color:#858585">43</div>
<div class="a" style="left:67.40px;top:540px;width:30.78px;height:19px;background:#2c2c1f"></div>
<svg class="a" style="left:69.40px;top:547px" width="7" height="5" viewBox="0 0 7 5"><path d="M0 2.5 H6 M4 0.5 L6 2.5 L4 4.5" fill="none" stroke="#5a5a48" stroke-width="0.9"/></svg>
<div class="a cl" style="left:98.18px;top:540px"><span style="color:#6a9955">--This is the base code of ScreenA.LvglLabel1_test</span></div>
<div class="a ln" style="top:540px;color:#858585">44</div>
<div class="a" style="left:67.4px;top:559px;width:672.6px;height:19px;background:#362c20"></div>
<div class="a" style="left:67.40px;top:559px;width:30.78px;height:19px;background:#433a26"></div>
<svg class="a" style="left:69.40px;top:566px" width="7" height="5" viewBox="0 0 7 5"><path d="M0 2.5 H6 M4 0.5 L6 2.5 L4 4.5" fill="none" stroke="#6e6248" stroke-width="0.9"/></svg>
<div class="a" style="left:159.74px;top:559px;width:115.43px;height:19px;background:rgba(90,90,90,0.55)"></div>
<div class="a cl" style="left:98.18px;top:559px"><span style="color:#e9a23b">ScreenA</span><span style="color:#d4d4d4">.</span><span style="color:#4ec9b0">LvglLabel1_test</span><span style="color:#d4d4d4">.</span><span style="color:#4ec9b0">self</span><span style="color:#3e3e3e">·</span><span style="color:#d4d4d4">=</span><span style="color:#3e3e3e">·</span><span style="color:#e9a23b">lvgl</span><span style="color:#d4d4d4">.</span><span style="color:#dcdcaa">label_create</span><span style="color:#f2c01e">(</span><span style="color:#e9a23b">ScreenA</span><span style="color:#d4d4d4">.</span><span style="color:#4ec9b0">contFather_ScreenA</span><span style="color:#d4d4d4">,</span><span style="color:#3e3e3e">·</span><span style="color:#569cd6">nil</span><span style="color:#f2c01e">)</span></div>
<svg class="a" style="left:336.74px;top:574px" width="30.8" height="3" viewBox="0 0 30.8 3"><path d="M0 1.5 Q1 -1 2 1.5 Q3 4 4 1.5 Q5 -1 6 1.5 Q7 4 8 1.5 Q9 -1 10 1.5 Q11 4 12 1.5 Q13 -1 14 1.5 Q15 4 16 1.5 Q17 -1 18 1.5 Q19 4 20 1.5 Q21 -1 22 1.5 Q23 4 24 1.5 Q25 -1 26 1.5 Q27 4 28 1.5 Q29 -1 30 1.5" fill="none" stroke="#cca700" stroke-width="1.1"/></svg>
<div class="a ln" style="top:559px;color:#858585">45</div>
<div class="a" style="left:67.4px;top:578px;width:672.6px;height:19px;background:#362c20"></div>
<div class="a" style="left:67.40px;top:578px;width:30.78px;height:19px;background:#433a26"></div>
<svg class="a" style="left:69.40px;top:585px" width="7" height="5" viewBox="0 0 7 5"><path d="M0 2.5 H6 M4 0.5 L6 2.5 L4 4.5" fill="none" stroke="#6e6248" stroke-width="0.9"/></svg>
<div class="a" style="left:305.95px;top:578px;width:115.43px;height:19px;background:rgba(90,90,90,0.55)"></div>
<div class="a cl" style="left:98.18px;top:578px"><span style="color:#e9a23b">lvgl</span><span style="color:#d4d4d4">.</span><span style="color:#dcdcaa">obj_set_click</span><span style="color:#f2c01e">(</span><span style="color:#e9a23b">ScreenA</span><span style="color:#d4d4d4">.</span><span style="color:#4ec9b0">LvglLabel1_test</span><span style="color:#d4d4d4">.</span><span style="color:#4ec9b0">self</span><span style="color:#d4d4d4">,</span><span style="color:#3e3e3e">·</span><span style="color:#569cd6">true</span><span style="color:#f2c01e">)</span><span class="wt">    <span class="cj">未定义的全局变量</span> `lvgl`<span class="cj">。</span></span></div>
<svg class="a" style="left:98.18px;top:593px" width="30.8" height="3" viewBox="0 0 30.8 3"><path d="M0 1.5 Q1 -1 2 1.5 Q3 4 4 1.5 Q5 -1 6 1.5 Q7 4 8 1.5 Q9 -1 10 1.5 Q11 4 12 1.5 Q13 -1 14 1.5 Q15 4 16 1.5 Q17 -1 18 1.5 Q19 4 20 1.5 Q21 -1 22 1.5 Q23 4 24 1.5 Q25 -1 26 1.5 Q27 4 28 1.5 Q29 -1 30 1.5" fill="none" stroke="#cca700" stroke-width="1.1"/></svg>
<div class="a ln" style="top:578px;color:#858585">46</div>
<div class="a" style="left:67.4px;top:597px;width:672.6px;height:19px;background:#362c20"></div>
<div class="a" style="left:67.40px;top:597px;width:30.78px;height:19px;background:#433a26"></div>
<svg class="a" style="left:69.40px;top:604px" width="7" height="5" viewBox="0 0 7 5"><path d="M0 2.5 H6 M4 0.5 L6 2.5 L4 4.5" fill="none" stroke="#6e6248" stroke-width="0.9"/></svg>
<div class="a" style="left:352.13px;top:597px;width:115.43px;height:19px;background:rgba(90,90,90,0.55)"></div>
<div class="a cl" style="left:98.18px;top:597px"><span style="color:#e9a23b">lvgl</span><span style="color:#d4d4d4">.</span><span style="color:#dcdcaa">label_set_long_mode</span><span style="color:#f2c01e">(</span><span style="color:#e9a23b">ScreenA</span><span style="color:#d4d4d4">.</span><span style="color:#4ec9b0">LvglLabel1_test</span><span style="color:#d4d4d4">.</span><span style="color:#4ec9b0">self</span><span style="color:#d4d4d4">,</span><span style="color:#3e3e3e">·</span><span style="color:#e9a23b">lvgl</span><span style="color:#d4d4d4">.</span><span style="color:#4ec9b0">LABEL_LONG_EXPAND</span><span style="color:#f2c01e">)</span><span class="wt">    <span class="cj">未定义的全局变量</span> `lvgl`<span class="cj">。</span></span></div>
<svg class="a" style="left:98.18px;top:612px" width="30.8" height="3" viewBox="0 0 30.8 3"><path d="M0 1.5 Q1 -1 2 1.5 Q3 4 4 1.5 Q5 -1 6 1.5 Q7 4 8 1.5 Q9 -1 10 1.5 Q11 4 12 1.5 Q13 -1 14 1.5 Q15 4 16 1.5 Q17 -1 18 1.5 Q19 4 20 1.5 Q21 -1 22 1.5 Q23 4 24 1.5 Q25 -1 26 1.5 Q27 4 28 1.5 Q29 -1 30 1.5" fill="none" stroke="#cca700" stroke-width="1.1"/></svg>
<svg class="a" style="left:521.42px;top:612px" width="30.8" height="3" viewBox="0 0 30.8 3"><path d="M0 1.5 Q1 -1 2 1.5 Q3 4 4 1.5 Q5 -1 6 1.5 Q7 4 8 1.5 Q9 -1 10 1.5 Q11 4 12 1.5 Q13 -1 14 1.5 Q15 4 16 1.5 Q17 -1 18 1.5 Q19 4 20 1.5 Q21 -1 22 1.5 Q23 4 24 1.5 Q25 -1 26 1.5 Q27 4 28 1.5 Q29 -1 30 1.5" fill="none" stroke="#cca700" stroke-width="1.1"/></svg>
<div class="a ln" style="top:597px;color:#858585">47</div>
<div class="a" style="left:67.4px;top:616px;width:672.6px;height:19px;background:#362c20"></div>
<div class="a" style="left:67.40px;top:616px;width:30.78px;height:19px;background:#433a26"></div>
<svg class="a" style="left:69.40px;top:623px" width="7" height="5" viewBox="0 0 7 5"><path d="M0 2.5 H6 M4 0.5 L6 2.5 L4 4.5" fill="none" stroke="#6e6248" stroke-width="0.9"/></svg>
<div class="a" style="left:321.34px;top:616px;width:115.43px;height:19px;background:rgba(90,90,90,0.55)"></div>
<div class="a cl" style="left:98.18px;top:616px"><span style="color:#e9a23b">lvgl</span><span style="color:#d4d4d4">.</span><span style="color:#dcdcaa">label_set_align</span><span style="color:#f2c01e">(</span><span style="color:#e9a23b">ScreenA</span><span style="color:#d4d4d4">.</span><span style="color:#4ec9b0">LvglLabel1_test</span><span style="color:#d4d4d4">.</span><span style="color:#4ec9b0">self</span><span style="color:#d4d4d4">,</span><span style="color:#3e3e3e">·</span><span style="color:#e9a23b">lvgl</span><span style="color:#d4d4d4">.</span><span style="color:#4ec9b0">LABEL_ALIGN_LEFT</span><span style="color:#f2c01e">)</span><span class="wt">    <span class="cj">未定义的全局变量</span> `lvgl`<span class="cj">。</span></span></div>
<svg class="a" style="left:98.18px;top:631px" width="30.8" height="3" viewBox="0 0 30.8 3"><path d="M0 1.5 Q1 -1 2 1.5 Q3 4 4 1.5 Q5 -1 6 1.5 Q7 4 8 1.5 Q9 -1 10 1.5 Q11 4 12 1.5 Q13 -1 14 1.5 Q15 4 16 1.5 Q17 -1 18 1.5 Q19 4 20 1.5 Q21 -1 22 1.5 Q23 4 24 1.5 Q25 -1 26 1.5 Q27 4 28 1.5 Q29 -1 30 1.5" fill="none" stroke="#cca700" stroke-width="1.1"/></svg>
<svg class="a" style="left:490.64px;top:631px" width="30.8" height="3" viewBox="0 0 30.8 3"><path d="M0 1.5 Q1 -1 2 1.5 Q3 4 4 1.5 Q5 -1 6 1.5 Q7 4 8 1.5 Q9 -1 10 1.5 Q11 4 12 1.5 Q13 -1 14 1.5 Q15 4 16 1.5 Q17 -1 18 1.5 Q19 4 20 1.5 Q21 -1 22 1.5 Q23 4 24 1.5 Q25 -1 26 1.5 Q27 4 28 1.5 Q29 -1 30 1.5" fill="none" stroke="#cca700" stroke-width="1.1"/></svg>
<div class="a ln" style="top:616px;color:#858585">48</div>
<div class="a" style="left:67.4px;top:635px;width:672.6px;height:19px;background:#362c20"></div>
<div class="a" style="left:67.40px;top:635px;width:30.78px;height:19px;background:#433a26"></div>
<svg class="a" style="left:69.40px;top:642px" width="7" height="5" viewBox="0 0 7 5"><path d="M0 2.5 H6 M4 0.5 L6 2.5 L4 4.5" fill="none" stroke="#6e6248" stroke-width="0.9"/></svg>
<div class="a" style="left:313.65px;top:635px;width:115.43px;height:19px;background:rgba(90,90,90,0.55)"></div>
<div class="a cl" style="left:98.18px;top:635px"><span style="color:#e9a23b">lvgl</span><span style="color:#d4d4d4">.</span><span style="color:#dcdcaa">label_set_text</span><span style="color:#f2c01e">(</span><span style="color:#e9a23b">ScreenA</span><span style="color:#d4d4d4">.</span><span style="color:#4ec9b0">LvglLabel1_test</span><span style="color:#d4d4d4">.</span><span style="color:#4ec9b0">self</span><span style="color:#d4d4d4">,</span><span style="color:#3e3e3e">·</span><span style="color:#ce9178">&quot;Label Text&quot;</span><span style="color:#f2c01e">)</span><span class="wt">    <span class="cj">未定义的全局变量</span> `lvgl`<span class="cj">。</span></span></div>
<svg class="a" style="left:98.18px;top:650px" width="30.8" height="3" viewBox="0 0 30.8 3"><path d="M0 1.5 Q1 -1 2 1.5 Q3 4 4 1.5 Q5 -1 6 1.5 Q7 4 8 1.5 Q9 -1 10 1.5 Q11 4 12 1.5 Q13 -1 14 1.5 Q15 4 16 1.5 Q17 -1 18 1.5 Q19 4 20 1.5 Q21 -1 22 1.5 Q23 4 24 1.5 Q25 -1 26 1.5 Q27 4 28 1.5 Q29 -1 30 1.5" fill="none" stroke="#cca700" stroke-width="1.1"/></svg>
<div class="a ln" style="top:635px;color:#858585">49</div>
<div class="a" style="left:67.4px;top:654px;width:672.6px;height:19px;background:#362c20"></div>
<div class="a" style="left:67.40px;top:654px;width:30.78px;height:19px;background:#433a26"></div>
<svg class="a" style="left:69.40px;top:661px" width="7" height="5" viewBox="0 0 7 5"><path d="M0 2.5 H6 M4 0.5 L6 2.5 L4 4.5" fill="none" stroke="#6e6248" stroke-width="0.9"/></svg>
<div class="a" style="left:275.17px;top:654px;width:115.43px;height:19px;background:rgba(90,90,90,0.55)"></div>
<div class="a cl" style="left:98.18px;top:654px"><span style="color:#e9a23b">lvgl</span><span style="color:#d4d4d4">.</span><span style="color:#dcdcaa">obj_align</span><span style="color:#f2c01e">(</span><span style="color:#e9a23b">ScreenA</span><span style="color:#d4d4d4">.</span><span style="color:#4ec9b0">LvglLabel1_test</span><span style="color:#d4d4d4">.</span><span style="color:#4ec9b0">self</span><span style="color:#d4d4d4">,</span><span style="color:#3e3e3e">·</span><span style="color:#e9a23b">ScreenA</span><span style="color:#d4d4d4">.</span><span style="color:#4ec9b0">contFather_ScreenA</span><span style="color:#d4d4d4">,</span><span style="color:#3e3e3e">·</span><span style="color:#e9a23b">lvgl</span><span style="color:#d4d4d4">.</span><span style="color:#4ec9b0">ALIGN_IN_TOP_LEFT</span><span class="wt">    <span class="cj">未定义的全局变量</span> `lvgl`<span class="cj">。</span></span></div>
<svg class="a" style="left:98.18px;top:669px" width="30.8" height="3" viewBox="0 0 30.8 3"><path d="M0 1.5 Q1 -1 2 1.5 Q3 4 4 1.5 Q5 -1 6 1.5 Q7 4 8 1.5 Q9 -1 10 1.5 Q11 4 12 1.5 Q13 -1 14 1.5 Q15 4 16 1.5 Q17 -1 18 1.5 Q19 4 20 1.5 Q21 -1 22 1.5 Q23 4 24 1.5 Q25 -1 26 1.5 Q27 4 28 1.5 Q29 -1 30 1.5" fill="none" stroke="#cca700" stroke-width="1.1"/></svg>
<svg class="a" style="left:659.94px;top:669px" width="30.8" height="3" viewBox="0 0 30.8 3"><path d="M0 1.5 Q1 -1 2 1.5 Q3 4 4 1.5 Q5 -1 6 1.5 Q7 4 8 1.5 Q9 -1 10 1.5 Q11 4 12 1.5 Q13 -1 14 1.5 Q15 4 16 1.5 Q17 -1 18 1.5 Q19 4 20 1.5 Q21 -1 22 1.5 Q23 4 24 1.5 Q25 -1 26 1.5 Q27 4 28 1.5 Q29 -1 30 1.5" fill="none" stroke="#cca700" stroke-width="1.1"/></svg>
<div class="a ln" style="top:654px;color:#858585">50</div>
<div class="a" style="left:67.4px;top:673px;width:672.6px;height:19px;background:#362c20"></div>
<div class="a" style="left:67.40px;top:673px;width:30.78px;height:19px;background:#433a26"></div>
<svg class="a" style="left:69.40px;top:680px" width="7" height="5" viewBox="0 0 7 5"><path d="M0 2.5 H6 M4 0.5 L6 2.5 L4 4.5" fill="none" stroke="#6e6248" stroke-width="0.9"/></svg>
<div class="a" style="left:305.95px;top:673px;width:115.43px;height:19px;background:rgba(90,90,90,0.55)"></div>
<div class="a" style="left:136.66px;top:673px;width:100.04px;height:19px;background:#2f3236"></div>
<div class="a cl" style="left:98.18px;top:673px"><span style="color:#e9a23b">lvgl</span><span style="color:#d4d4d4">.</span><span style="color:#dcdcaa">obj_add_style</span><span style="color:#f2c01e">(</span><span style="color:#e9a23b">ScreenA</span><span style="color:#d4d4d4">.</span><span style="color:#4ec9b0">LvglLabel1_test</span><span style="color:#d4d4d4">.</span><span style="color:#4ec9b0">self</span><span style="color:#d4d4d4">,</span><span style="color:#3e3e3e">·</span><span style="color:#e9a23b">lvgl</span><span style="color:#d4d4d4">.</span><span style="color:#4ec9b0">LABEL_PART_MAIN</span><span style="color:#d4d4d4">,</span><span style="color:#3e3e3e">·</span><span style="color:#e9a23b">Style_LvglLabel1_test_1</span><span style="color:#f2c01e">)</span><span class="wt">    <span class="cj">未定义的全局变量</span> `lvgl`<span class="cj">。</span></span></div>
<svg class="a" style="left:98.18px;top:688px" width="30.8" height="3" viewBox="0 0 30.8 3"><path d="M0 1.5 Q1 -1 2 1.5 Q3 4 4 1.5 Q5 -1 6 1.5 Q7 4 8 1.5 Q9 -1 10 1.5 Q11 4 12 1.5 Q13 -1 14 1.5 Q15 4 16 1.5 Q17 -1 18 1.5 Q19 4 20 1.5 Q21 -1 22 1.5 Q23 4 24 1.5 Q25 -1 26 1.5 Q27 4 28 1.5 Q29 -1 30 1.5" fill="none" stroke="#cca700" stroke-width="1.1"/></svg>
<svg class="a" style="left:475.25px;top:688px" width="30.8" height="3" viewBox="0 0 30.8 3"><path d="M0 1.5 Q1 -1 2 1.5 Q3 4 4 1.5 Q5 -1 6 1.5 Q7 4 8 1.5 Q9 -1 10 1.5 Q11 4 12 1.5 Q13 -1 14 1.5 Q15 4 16 1.5 Q17 -1 18 1.5 Q19 4 20 1.5 Q21 -1 22 1.5 Q23 4 24 1.5 Q25 -1 26 1.5 Q27 4 28 1.5 Q29 -1 30 1.5" fill="none" stroke="#cca700" stroke-width="1.1"/></svg>
<div class="a ln" style="top:673px;color:#858585">51</div>
<div class="a cl" style="left:67.40px;top:692px"><span style="color:#c586c0">end</span></div>
<div class="a ln" style="top:692px;color:#858585">52</div>
<div class="a cl" style="left:67.40px;top:711px"><span style="color:#e9a23b">ScreenA</span><span style="color:#d4d4d4">.</span><span style="color:#dcdcaa">free</span><span style="color:#3e3e3e">·</span><span style="color:#d4d4d4">=</span><span style="color:#3e3e3e">·</span><span style="color:#c586c0">function</span><span style="color:#f2c01e">(</span><span style="color:#f2c01e">)</span></div>
<div class="a ln" style="top:711px;color:#858585">53</div>
<div class="a" style="left:67.4px;top:730px;width:672.6px;height:19px;background:#362c20"></div>
<div class="a" style="left:67.40px;top:730px;width:30.78px;height:19px;background:#433a26"></div>
<svg class="a" style="left:69.40px;top:737px" width="7" height="5" viewBox="0 0 7 5"><path d="M0 2.5 H6 M4 0.5 L6 2.5 L4 4.5" fill="none" stroke="#6e6248" stroke-width="0.9"/></svg>
<div class="a cl" style="left:98.18px;top:730px"><span style="color:#e9a23b">lvgl</span><span style="color:#d4d4d4">.</span><span style="color:#dcdcaa">obj_del</span><span style="color:#f2c01e">(</span><span style="color:#e9a23b">ScreenA</span><span style="color:#d4d4d4">.</span><span style="color:#4ec9b0">contFather_ScreenA</span><span style="color:#f2c01e">)</span><span class="wt">    <span class="cj">未定义的全局变量</span> `lvgl`<span class="cj">。</span></span></div>
<svg class="a" style="left:98.18px;top:745px" width="30.8" height="3" viewBox="0 0 30.8 3"><path d="M0 1.5 Q1 -1 2 1.5 Q3 4 4 1.5 Q5 -1 6 1.5 Q7 4 8 1.5 Q9 -1 10 1.5 Q11 4 12 1.5 Q13 -1 14 1.5 Q15 4 16 1.5 Q17 -1 18 1.5 Q19 4 20 1.5 Q21 -1 22 1.5 Q23 4 24 1.5 Q25 -1 26 1.5 Q27 4 28 1.5 Q29 -1 30 1.5" fill="none" stroke="#cca700" stroke-width="1.1"/></svg>
<div class="a ln" style="top:730px;color:#858585">54</div>
<div class="a" style="left:67.40px;top:749px;width:30.78px;height:19px;background:#2c2c1f"></div>
<svg class="a" style="left:69.40px;top:756px" width="7" height="5" viewBox="0 0 7 5"><path d="M0 2.5 H6 M4 0.5 L6 2.5 L4 4.5" fill="none" stroke="#5a5a48" stroke-width="0.9"/></svg>
<div class="a cl" style="left:98.18px;top:749px"><span style="color:#e9a23b">ScreenA</span><span style="color:#d4d4d4">.</span><span style="color:#4ec9b0">contFather_ScreenA</span><span style="color:#3e3e3e">·</span><span style="color:#d4d4d4">=</span><span style="color:#3e3e3e">·</span><span style="color:#569cd6">nil</span></div>
<div class="a ln" style="top:749px;color:#858585">55</div>
<div class="a cl" style="left:67.40px;top:768px"><span style="color:#c586c0">end</span></div>
<div class="a ln" style="top:768px;color:#858585">56</div> </div>
 <!-- indent guides -->
 <div class="a" style="left:67px;top:27px;width:1px;height:114px;background:#4a4a44"></div><div class="a" style="left:67px;top:217px;width:1px;height:76px;background:#4a4a44"></div><div class="a" style="left:67px;top:388px;width:1px;height:304px;background:#4a4a44"></div><div class="a" style="left:67px;top:730px;width:1px;height:38px;background:#4a4a44"></div>
 <!-- active indent guide -->
 <div class="a" style="left:98px;top:46px;width:1px;height:19px;background:#707070"></div>
 <!-- bracket match boxes -->
 <div class="a" style="left:67px;top:197px;width:9px;height:19px;border:1px solid #888"></div>
 <div class="a" style="left:67px;top:292px;width:9px;height:19px;border:1px solid #888"></div>
 <!-- cursor -->
 <div class="a" style="left:158px;top:273px;width:2px;height:19px;background:#aeafad"></div>
 <!-- minimap -->
 <div class="a" id="minimap" style="left:740px;top:22px;width:96px;height:755px;overflow:hidden"><div class="a" style="left:8px;top:0px;width:76px;height:1px;background:#6a9955;opacity:0.6"></div>
<div class="a" style="left:8px;top:2px;width:2px;height:1px;background:#6a9955;opacity:0.6"></div>
<div class="a" style="left:11px;top:2px;width:2px;height:1px;background:#6a9955;opacity:0.6"></div>
<div class="a" style="left:14px;top:2px;width:4px;height:1px;background:#6a9955;opacity:0.6"></div>
<div class="a" style="left:19px;top:2px;width:4px;height:1px;background:#6a9955;opacity:0.6"></div>
<div class="a" style="left:24px;top:2px;width:13px;height:1px;background:#6a9955;opacity:0.6"></div>
<div class="a" style="left:38px;top:2px;width:9px;height:1px;background:#6a9955;opacity:0.6"></div>
<div class="a" style="left:48px;top:2px;width:4px;height:1px;background:#6a9955;opacity:0.6"></div>
<div class="a" style="left:53px;top:2px;width:2px;height:1px;background:#6a9955;opacity:0.6"></div>
<div class="a" style="left:56px;top:2px;width:3px;height:1px;background:#6a9955;opacity:0.6"></div>
<div class="a" style="left:60px;top:2px;width:7px;height:1px;background:#6a9955;opacity:0.6"></div>
<div class="a" style="left:68px;top:2px;width:2px;height:1px;background:#6a9955;opacity:0.6"></div>
<div class="a" style="left:71px;top:2px;width:8px;height:1px;background:#6a9955;opacity:0.6"></div>
<div class="a" style="left:8px;top:4px;width:2px;height:1px;background:#6a9955;opacity:0.6"></div>
<div class="a" style="left:11px;top:4px;width:2px;height:1px;background:#6a9955;opacity:0.6"></div>
<div class="a" style="left:14px;top:4px;width:2px;height:1px;background:#6a9955;opacity:0.6"></div>
<div class="a" style="left:17px;top:4px;width:3px;height:1px;background:#6a9955;opacity:0.6"></div>
<div class="a" style="left:21px;top:4px;width:6px;height:1px;background:#6a9955;opacity:0.6"></div>
<div class="a" style="left:28px;top:4px;width:4px;height:1px;background:#6a9955;opacity:0.6"></div>
<div class="a" style="left:33px;top:4px;width:5px;height:1px;background:#6a9955;opacity:0.6"></div>
<div class="a" style="left:39px;top:4px;width:12px;height:1px;background:#6a9955;opacity:0.6"></div>
<div class="a" style="left:52px;top:4px;width:4px;height:1px;background:#6a9955;opacity:0.6"></div>
<div class="a" style="left:57px;top:4px;width:2px;height:1px;background:#6a9955;opacity:0.6"></div>
<div class="a" style="left:60px;top:4px;width:11px;height:1px;background:#6a9955;opacity:0.6"></div>
<div class="a" style="left:8px;top:6px;width:76px;height:1px;background:#6a9955;opacity:0.6"></div>
<div class="a" style="left:8px;top:10px;width:8px;height:1px;background:#6a9955;opacity:0.6"></div>
<div class="a" style="left:17px;top:10px;width:5px;height:1px;background:#6a9955;opacity:0.6"></div>
<div class="a" style="left:23px;top:10px;width:4px;height:1px;background:#6a9955;opacity:0.6"></div>
<div class="a" style="left:8px;top:12px;width:7px;height:1px;background:#dcdcaa;opacity:0.6"></div>
<div class="a" style="left:16px;top:12px;width:6px;height:1px;background:#ce9178;opacity:0.6"></div>
<div class="a" style="left:8px;top:18px;width:88px;height:2px;background:#5a5a5a"></div>
<div class="a" style="left:8px;top:16px;width:5px;height:1px;background:#569cd6;opacity:0.6"></div>
<div class="a" style="left:14px;top:16px;width:8px;height:1px;background:#c586c0;opacity:0.6"></div>
<div class="a" style="left:23px;top:16px;width:10px;height:1px;background:#dcdcaa;opacity:0.6"></div>
<div class="a" style="left:33px;top:16px;width:1px;height:1px;background:#f2c01e;opacity:0.6"></div>
<div class="a" style="left:34px;top:16px;width:1px;height:1px;background:#f2c01e;opacity:0.6"></div>
<div class="a" style="left:12px;top:18px;width:5px;height:1px;background:#c586c0;opacity:0.6"></div>
<div class="a" style="left:18px;top:18px;width:1px;height:1px;background:#d4d4d4;opacity:0.6"></div>
<div class="a" style="left:20px;top:18px;width:1px;height:1px;background:#d4d4d4;opacity:0.6"></div>
<div class="a" style="left:22px;top:18px;width:2px;height:1px;background:#f2c01e;opacity:0.6"></div>
<div class="a" style="left:12px;top:20px;width:5px;height:1px;background:#c586c0;opacity:0.6"></div>
<div class="a" style="left:18px;top:20px;width:5px;height:1px;background:#9cdcfe;opacity:0.6"></div>
<div class="a" style="left:24px;top:20px;width:1px;height:1px;background:#d4d4d4;opacity:0.6"></div>
<div class="a" style="left:26px;top:20px;width:2px;height:1px;background:#f2c01e;opacity:0.6"></div>
<div class="a" style="left:12px;top:22px;width:12px;height:1px;background:#dcdcaa;opacity:0.6"></div>
<div class="a" style="left:24px;top:22px;width:1px;height:1px;background:#f2c01e;opacity:0.6"></div>
<div class="a" style="left:25px;top:22px;width:1px;height:1px;background:#9cdcfe;opacity:0.6"></div>
<div class="a" style="left:26px;top:22px;width:1px;height:1px;background:#d4d4d4;opacity:0.6"></div>
<div class="a" style="left:28px;top:22px;width:5px;height:1px;background:#9cdcfe;opacity:0.6"></div>
<div class="a" style="left:33px;top:22px;width:1px;height:1px;background:#f2c01e;opacity:0.6"></div>
<div class="a" style="left:12px;top:24px;width:5px;height:1px;background:#9cdcfe;opacity:0.6"></div>
<div class="a" style="left:17px;top:24px;width:1px;height:1px;background:#d4d4d4;opacity:0.6"></div>
<div class="a" style="left:18px;top:24px;width:7px;height:1px;background:#4ec9b0;opacity:0.6"></div>
<div class="a" style="left:26px;top:24px;width:1px;height:1px;background:#d4d4d4;opacity:0.6"></div>
<div class="a" style="left:28px;top:24px;width:5px;height:1px;background:#9cdcfe;opacity:0.6"></div>
<div class="a" style="left:12px;top:26px;width:5px;height:1px;background:#9cdcfe;opacity:0.6"></div>
<div class="a" style="left:17px;top:26px;width:1px;height:1px;background:#d4d4d4;opacity:0.6"></div>
<div class="a" style="left:18px;top:26px;width:10px;height:1px;background:#dcdcaa;opacity:0.6"></div>
<div class="a" style="left:29px;top:26px;width:1px;height:1px;background:#d4d4d4;opacity:0.6"></div>
<div class="a" style="left:31px;top:26px;width:8px;height:1px;background:#c586c0;opacity:0.6"></div>
<div class="a" style="left:39px;top:26px;width:1px;height:1px;background:#f2c01e;opacity:0.6"></div>
<div class="a" style="left:40px;top:26px;width:1px;height:1px;background:#9cdcfe;opacity:0.6"></div>
<div class="a" style="left:41px;top:26px;width:1px;height:1px;background:#f2c01e;opacity:0.6"></div>
<div class="a" style="left:16px;top:28px;width:6px;height:1px;background:#c586c0;opacity:0.6"></div>
<div class="a" style="left:23px;top:28px;width:1px;height:1px;background:#9cdcfe;opacity:0.6"></div>
<div class="a" style="left:24px;top:28px;width:1px;height:1px;background:#d4d4d4;opacity:0.6"></div>
<div class="a" style="left:25px;top:28px;width:4px;height:1px;background:#4ec9b0;opacity:0.6"></div>
<div class="a" style="left:12px;top:30px;width:3px;height:1px;background:#c586c0;opacity:0.6"></div>
<div class="a" style="left:12px;top:32px;width:5px;height:1px;background:#9cdcfe;opacity:0.6"></div>
<div class="a" style="left:17px;top:32px;width:1px;height:1px;background:#d4d4d4;opacity:0.6"></div>
<div class="a" style="left:18px;top:32px;width:8px;height:1px;background:#dcdcaa;opacity:0.6"></div>
<div class="a" style="left:27px;top:32px;width:1px;height:1px;background:#d4d4d4;opacity:0.6"></div>
<div class="a" style="left:29px;top:32px;width:8px;height:1px;background:#c586c0;opacity:0.6"></div>
<div class="a" style="left:37px;top:32px;width:1px;height:1px;background:#f2c01e;opacity:0.6"></div>
<div class="a" style="left:38px;top:32px;width:1px;height:1px;background:#9cdcfe;opacity:0.6"></div>
<div class="a" style="left:39px;top:32px;width:1px;height:1px;background:#f2c01e;opacity:0.6"></div>
<div class="a" style="left:16px;top:34px;width:6px;height:1px;background:#c586c0;opacity:0.6"></div>
<div class="a" style="left:23px;top:34px;width:1px;height:1px;background:#9cdcfe;opacity:0.6"></div>
<div class="a" style="left:24px;top:34px;width:1px;height:1px;background:#d4d4d4;opacity:0.6"></div>
<div class="a" style="left:25px;top:34px;width:2px;height:1px;background:#4ec9b0;opacity:0.6"></div>
<div class="a" style="left:12px;top:36px;width:3px;height:1px;background:#c586c0;opacity:0.6"></div>
<div class="a" style="left:12px;top:38px;width:5px;height:1px;background:#9cdcfe;opacity:0.6"></div>
<div class="a" style="left:17px;top:38px;width:1px;height:1px;background:#d4d4d4;opacity:0.6"></div>
<div class="a" style="left:18px;top:38px;width:4px;height:1px;background:#4ec9b0;opacity:0.6"></div>
<div class="a" style="left:23px;top:38px;width:1px;height:1px;background:#d4d4d4;opacity:0.6"></div>
<div class="a" style="left:25px;top:38px;width:3px;height:1px;background:#569cd6;opacity:0.6"></div>
<div class="a" style="left:12px;top:40px;width:5px;height:1px;background:#9cdcfe;opacity:0.6"></div>
<div class="a" style="left:17px;top:40px;width:1px;height:1px;background:#d4d4d4;opacity:0.6"></div>
<div class="a" style="left:18px;top:40px;width:2px;height:1px;background:#4ec9b0;opacity:0.6"></div>
<div class="a" style="left:21px;top:40px;width:1px;height:1px;background:#d4d4d4;opacity:0.6"></div>
<div class="a" style="left:23px;top:40px;width:8px;height:1px;background:#c586c0;opacity:0.6"></div>
<div class="a" style="left:31px;top:40px;width:1px;height:1px;background:#f2c01e;opacity:0.6"></div>
<div class="a" style="left:32px;top:40px;width:1px;height:1px;background:#9cdcfe;opacity:0.6"></div>
<div class="a" style="left:33px;top:40px;width:1px;height:1px;background:#f2c01e;opacity:0.6"></div>
<div class="a" style="left:35px;top:40px;width:3px;height:1px;background:#c586c0;opacity:0.6"></div>
<div class="a" style="left:12px;top:42px;width:6px;height:1px;background:#c586c0;opacity:0.6"></div>
<div class="a" style="left:19px;top:42px;width:1px;height:1px;background:#9cdcfe;opacity:0.6"></div>
<div class="a" style="left:8px;top:44px;width:3px;height:1px;background:#c586c0;opacity:0.6"></div>
<div class="a" style="left:8px;top:48px;width:7px;height:1px;background:#e9a23b;opacity:0.6"></div>
<div class="a" style="left:16px;top:48px;width:1px;height:1px;background:#d4d4d4;opacity:0.6"></div>
<div class="a" style="left:17px;top:48px;width:1px;height:1px;background:#3e3e3e;opacity:0.6"></div>
<div class="a" style="left:8px;top:50px;width:1px;height:1px;background:#f2c01e;opacity:0.6"></div>
<div class="a" style="left:12px;top:52px;width:6px;height:1px;background:#dcdcaa;opacity:0.6"></div>
<div class="a" style="left:19px;top:52px;width:1px;height:1px;background:#d4d4d4;opacity:0.6"></div>
<div class="a" style="left:21px;top:52px;width:3px;height:1px;background:#569cd6;opacity:0.6"></div>
<div class="a" style="left:24px;top:52px;width:1px;height:1px;background:#d4d4d4;opacity:0.6"></div>
<div class="a" style="left:25px;top:52px;width:1px;height:1px;background:#3e3e3e;opacity:0.6"></div>
<div class="a" style="left:12px;top:54px;width:4px;height:1px;background:#4ec9b0;opacity:0.6"></div>
<div class="a" style="left:17px;top:54px;width:1px;height:1px;background:#d4d4d4;opacity:0.6"></div>
<div class="a" style="left:19px;top:54px;width:3px;height:1px;background:#569cd6;opacity:0.6"></div>
<div class="a" style="left:22px;top:54px;width:1px;height:1px;background:#d4d4d4;opacity:0.6"></div>
<div class="a" style="left:12px;top:56px;width:18px;height:1px;background:#4ec9b0;opacity:0.6"></div>
<div class="a" style="left:31px;top:56px;width:1px;height:1px;background:#d4d4d4;opacity:0.6"></div>
<div class="a" style="left:33px;top:56px;width:3px;height:1px;background:#569cd6;opacity:0.6"></div>
<div class="a" style="left:36px;top:56px;width:1px;height:1px;background:#d4d4d4;opacity:0.6"></div>
<div class="a" style="left:8px;top:58px;width:88px;height:2px;background:#264f78"></div>
<div class="a" style="left:12px;top:58px;width:15px;height:1px;background:#4ec9b0;opacity:0.6"></div>
<div class="a" style="left:28px;top:58px;width:1px;height:1px;background:#d4d4d4;opacity:0.6"></div>
<div class="a" style="left:30px;top:58px;width:10px;height:1px;background:#dcdcaa;opacity:0.6"></div>
<div class="a" style="left:40px;top:58px;width:1px;height:1px;background:#f2c01e;opacity:0.6"></div>
<div class="a" style="left:41px;top:58px;width:1px;height:1px;background:#f2c01e;opacity:0.6"></div>
<div class="a" style="left:42px;top:58px;width:1px;height:1px;background:#d4d4d4;opacity:0.6"></div>
<div class="a" style="left:8px;top:60px;width:1px;height:1px;background:#f2c01e;opacity:0.6"></div>
<div class="a" style="left:8px;top:62px;width:76px;height:1px;background:#6a9955;opacity:0.6"></div>
<div class="a" style="left:8px;top:64px;width:5px;height:1px;background:#6a9955;opacity:0.6"></div>
<div class="a" style="left:14px;top:64px;width:9px;height:1px;background:#6a9955;opacity:0.6"></div>
<div class="a" style="left:24px;top:64px;width:2px;height:1px;background:#6a9955;opacity:0.6"></div>
<div class="a" style="left:27px;top:64px;width:3px;height:1px;background:#6a9955;opacity:0.6"></div>
<div class="a" style="left:31px;top:64px;width:7px;height:1px;background:#6a9955;opacity:0.6"></div>
<div class="a" style="left:39px;top:64px;width:2px;height:1px;background:#6a9955;opacity:0.6"></div>
<div class="a" style="left:42px;top:64px;width:7px;height:1px;background:#6a9955;opacity:0.6"></div>
<div class="a" style="left:50px;top:64px;width:7px;height:1px;background:#6a9955;opacity:0.6"></div>
<div class="a" style="left:8px;top:66px;width:75px;height:1px;background:#6a9955;opacity:0.6"></div>
<div class="a" style="left:8px;top:68px;width:7px;height:1px;background:#e9a23b;opacity:0.6"></div>
<div class="a" style="left:15px;top:68px;width:1px;height:1px;background:#d4d4d4;opacity:0.6"></div>
<div class="a" style="left:16px;top:68px;width:6px;height:1px;background:#dcdcaa;opacity:0.6"></div>
<div class="a" style="left:23px;top:68px;width:1px;height:1px;background:#d4d4d4;opacity:0.6"></div>
<div class="a" style="left:25px;top:68px;width:8px;height:1px;background:#c586c0;opacity:0.6"></div>
<div class="a" style="left:33px;top:68px;width:1px;height:1px;background:#f2c01e;opacity:0.6"></div>
<div class="a" style="left:34px;top:68px;width:1px;height:1px;background:#f2c01e;opacity:0.6"></div>
<div class="a" style="left:8px;top:70px;width:88px;height:2px;background:#7d6c0a"></div>
<div class="a" style="left:12px;top:70px;width:7px;height:1px;background:#e9a23b;opacity:0.6"></div>
<div class="a" style="left:19px;top:70px;width:1px;height:1px;background:#d4d4d4;opacity:0.6"></div>
<div class="a" style="left:20px;top:70px;width:18px;height:1px;background:#4ec9b0;opacity:0.6"></div>
<div class="a" style="left:39px;top:70px;width:1px;height:1px;background:#d4d4d4;opacity:0.6"></div>
<div class="a" style="left:41px;top:70px;width:4px;height:1px;background:#e9a23b;opacity:0.6"></div>
<div class="a" style="left:45px;top:70px;width:1px;height:1px;background:#d4d4d4;opacity:0.6"></div>
<div class="a" style="left:46px;top:70px;width:11px;height:1px;background:#dcdcaa;opacity:0.6"></div>
<div class="a" style="left:57px;top:70px;width:1px;height:1px;background:#f2c01e;opacity:0.6"></div>
<div class="a" style="left:58px;top:70px;width:4px;height:1px;background:#e9a23b;opacity:0.6"></div>
<div class="a" style="left:62px;top:70px;width:1px;height:1px;background:#d4d4d4;opacity:0.6"></div>
<div class="a" style="left:63px;top:70px;width:7px;height:1px;background:#dcdcaa;opacity:0.6"></div>
<div class="a" style="left:70px;top:70px;width:1px;height:1px;background:#c8408a;opacity:0.6"></div>
<div class="a" style="left:71px;top:70px;width:1px;height:1px;background:#c8408a;opacity:0.6"></div>
<div class="a" style="left:72px;top:70px;width:1px;height:1px;background:#d4d4d4;opacity:0.6"></div>
<div class="a" style="left:74px;top:70px;width:3px;height:1px;background:#569cd6;opacity:0.6"></div>
<div class="a" style="left:77px;top:70px;width:1px;height:1px;background:#f2c01e;opacity:0.6"></div>
<div class="a" style="left:41px;top:70px;width:4px;height:2px;background:#e6c000"></div>
<div class="a" style="left:58px;top:70px;width:4px;height:2px;background:#e6c000"></div>
<div class="a" style="left:8px;top:72px;width:88px;height:2px;background:#7d6c0a"></div>
<div class="a" style="left:12px;top:72px;width:4px;height:1px;background:#e9a23b;opacity:0.6"></div>
<div class="a" style="left:16px;top:72px;width:1px;height:1px;background:#d4d4d4;opacity:0.6"></div>
<div class="a" style="left:17px;top:72px;width:12px;height:1px;background:#dcdcaa;opacity:0.6"></div>
<div class="a" style="left:29px;top:72px;width:1px;height:1px;background:#f2c01e;opacity:0.6"></div>
<div class="a" style="left:30px;top:72px;width:7px;height:1px;background:#e9a23b;opacity:0.6"></div>
<div class="a" style="left:37px;top:72px;width:1px;height:1px;background:#d4d4d4;opacity:0.6"></div>
<div class="a" style="left:38px;top:72px;width:18px;height:1px;background:#4ec9b0;opacity:0.6"></div>
<div class="a" style="left:56px;top:72px;width:1px;height:1px;background:#d4d4d4;opacity:0.6"></div>
<div class="a" style="left:58px;top:72px;width:3px;height:1px;background:#b5cea8;opacity:0.6"></div>
<div class="a" style="left:61px;top:72px;width:1px;height:1px;background:#d4d4d4;opacity:0.6"></div>
<div class="a" style="left:63px;top:72px;width:3px;height:1px;background:#b5cea8;opacity:0.6"></div>
<div class="a" style="left:66px;top:72px;width:1px;height:1px;background:#f2c01e;opacity:0.6"></div>
<div class="a" style="left:12px;top:72px;width:4px;height:2px;background:#e6c000"></div>
<div class="a" style="left:8px;top:74px;width:88px;height:2px;background:#7d6c0a"></div>
<div class="a" style="left:12px;top:74px;width:4px;height:1px;background:#e9a23b;opacity:0.6"></div>
<div class="a" style="left:16px;top:74px;width:1px;height:1px;background:#d4d4d4;opacity:0.6"></div>
<div class="a" style="left:17px;top:74px;width:9px;height:1px;background:#dcdcaa;opacity:0.6"></div>
<div class="a" style="left:26px;top:74px;width:1px;height:1px;background:#f2c01e;opacity:0.6"></div>
<div class="a" style="left:27px;top:74px;width:7px;height:1px;background:#e9a23b;opacity:0.6"></div>
<div class="a" style="left:34px;top:74px;width:1px;height:1px;background:#d4d4d4;opacity:0.6"></div>
<div class="a" style="left:35px;top:74px;width:18px;height:1px;background:#4ec9b0;opacity:0.6"></div>
<div class="a" style="left:53px;top:74px;width:1px;height:1px;background:#d4d4d4;opacity:0.6"></div>
<div class="a" style="left:55px;top:74px;width:3px;height:1px;background:#569cd6;opacity:0.6"></div>
<div class="a" style="left:58px;top:74px;width:1px;height:1px;background:#d4d4d4;opacity:0.6"></div>
<div class="a" style="left:60px;top:74px;width:4px;height:1px;background:#e9a23b;opacity:0.6"></div>
<div class="a" style="left:64px;top:74px;width:1px;height:1px;background:#d4d4d4;opacity:0.6"></div>
<div class="a" style="left:65px;top:74px;width:17px;height:1px;background:#4ec9b0;opacity:0.6"></div>
<div class="a" style="left:82px;top:74px;width:1px;height:1px;background:#d4d4d4;opacity:0.6"></div>
<div class="a" style="left:84px;top:74px;width:1px;height:1px;background:#b5cea8;opacity:0.6"></div>
<div class="a" style="left:85px;top:74px;width:1px;height:1px;background:#d4d4d4;opacity:0.6"></div>
<div class="a" style="left:87px;top:74px;width:1px;height:1px;background:#b5cea8;opacity:0.6"></div>
<div class="a" style="left:88px;top:74px;width:1px;height:1px;background:#f2c01e;opacity:0.6"></div>
<div class="a" style="left:12px;top:74px;width:4px;height:2px;background:#e6c000"></div>
<div class="a" style="left:60px;top:74px;width:4px;height:2px;background:#e6c000"></div>
<div class="a" style="left:12px;top:78px;width:6px;height:1px;background:#6a9955;opacity:0.6"></div>
<div class="a" style="left:19px;top:78px;width:2px;height:1px;background:#6a9955;opacity:0.6"></div>
<div class="a" style="left:22px;top:78px;width:3px;height:1px;background:#6a9955;opacity:0.6"></div>
<div class="a" style="left:26px;top:78px;width:17px;height:1px;background:#6a9955;opacity:0.6"></div>
<div class="a" style="left:44px;top:78px;width:5px;height:1px;background:#6a9955;opacity:0.6"></div>
<div class="a" style="left:50px;top:78px;width:2px;height:1px;background:#6a9955;opacity:0.6"></div>
<div class="a" style="left:53px;top:78px;width:23px;height:1px;background:#6a9955;opacity:0.6"></div>
<div class="a" style="left:8px;top:80px;width:88px;height:2px;background:#7d6c0a"></div>
<div class="a" style="left:12px;top:80px;width:23px;height:1px;background:#e9a23b;opacity:0.6"></div>
<div class="a" style="left:35px;top:80px;width:1px;height:1px;background:#d4d4d4;opacity:0.6"></div>
<div class="a" style="left:36px;top:80px;width:4px;height:1px;background:#e9a23b;opacity:0.6"></div>
<div class="a" style="left:40px;top:80px;width:1px;height:1px;background:#d4d4d4;opacity:0.6"></div>
<div class="a" style="left:41px;top:80px;width:7px;height:1px;background:#dcdcaa;opacity:0.6"></div>
<div class="a" style="left:48px;top:80px;width:1px;height:1px;background:#f2c01e;opacity:0.6"></div>
<div class="a" style="left:49px;top:80px;width:1px;height:1px;background:#f2c01e;opacity:0.6"></div>
<div class="a" style="left:36px;top:80px;width:4px;height:2px;background:#e6c000"></div>
<div class="a" style="left:8px;top:82px;width:88px;height:2px;background:#7d6c0a"></div>
<div class="a" style="left:12px;top:82px;width:4px;height:1px;background:#e9a23b;opacity:0.6"></div>
<div class="a" style="left:16px;top:82px;width:1px;height:1px;background:#d4d4d4;opacity:0.6"></div>
<div class="a" style="left:17px;top:82px;width:10px;height:1px;background:#dcdcaa;opacity:0.6"></div>
<div class="a" style="left:27px;top:82px;width:1px;height:1px;background:#f2c01e;opacity:0.6"></div>
<div class="a" style="left:28px;top:82px;width:23px;height:1px;background:#e9a23b;opacity:0.6"></div>
<div class="a" style="left:51px;top:82px;width:1px;height:1px;background:#f2c01e;opacity:0.6"></div>
<div class="a" style="left:12px;top:82px;width:4px;height:2px;background:#e6c000"></div>
<div class="a" style="left:12px;top:86px;width:6px;height:1px;background:#6a9955;opacity:0.6"></div>
<div class="a" style="left:19px;top:86px;width:2px;height:1px;background:#6a9955;opacity:0.6"></div>
<div class="a" style="left:22px;top:86px;width:3px;height:1px;background:#6a9955;opacity:0.6"></div>
<div class="a" style="left:26px;top:86px;width:4px;height:1px;background:#6a9955;opacity:0.6"></div>
<div class="a" style="left:31px;top:86px;width:4px;height:1px;background:#6a9955;opacity:0.6"></div>
<div class="a" style="left:36px;top:86px;width:2px;height:1px;background:#6a9955;opacity:0.6"></div>
<div class="a" style="left:39px;top:86px;width:23px;height:1px;background:#6a9955;opacity:0.6"></div>
<div class="a" style="left:8px;top:88px;width:88px;height:2px;background:#7d6c0a"></div>
<div class="a" style="left:12px;top:88px;width:7px;height:1px;background:#e9a23b;opacity:0.6"></div>
<div class="a" style="left:19px;top:88px;width:1px;height:1px;background:#d4d4d4;opacity:0.6"></div>
<div class="a" style="left:20px;top:88px;width:15px;height:1px;background:#4ec9b0;opacity:0.6"></div>
<div class="a" style="left:35px;top:88px;width:1px;height:1px;background:#d4d4d4;opacity:0.6"></div>
<div class="a" style="left:36px;top:88px;width:4px;height:1px;background:#4ec9b0;opacity:0.6"></div>
<div class="a" style="left:41px;top:88px;width:1px;height:1px;background:#d4d4d4;opacity:0.6"></div>
<div class="a" style="left:43px;top:88px;width:4px;height:1px;background:#e9a23b;opacity:0.6"></div>
<div class="a" style="left:47px;top:88px;width:1px;height:1px;background:#d4d4d4;opacity:0.6"></div>
<div class="a" style="left:48px;top:88px;width:12px;height:1px;background:#dcdcaa;opacity:0.6"></div>
<div class="a" style="left:60px;top:88px;width:1px;height:1px;background:#f2c01e;opacity:0.6"></div>
<div class="a" style="left:61px;top:88px;width:7px;height:1px;background:#e9a23b;opacity:0.6"></div>
<div class="a" style="left:68px;top:88px;width:1px;height:1px;background:#d4d4d4;opacity:0.6"></div>
<div class="a" style="left:69px;top:88px;width:18px;height:1px;background:#4ec9b0;opacity:0.6"></div>
<div class="a" style="left:87px;top:88px;width:1px;height:1px;background:#d4d4d4;opacity:0.6"></div>
<div class="a" style="left:89px;top:88px;width:3px;height:1px;background:#569cd6;opacity:0.6"></div>
<div class="a" style="left:92px;top:88px;width:1px;height:1px;background:#f2c01e;opacity:0.6"></div>
<div class="a" style="left:43px;top:88px;width:4px;height:2px;background:#e6c000"></div>
<div class="a" style="left:8px;top:90px;width:88px;height:2px;background:#7d6c0a"></div>
<div class="a" style="left:12px;top:90px;width:4px;height:1px;background:#e9a23b;opacity:0.6"></div>
<div class="a" style="left:16px;top:90px;width:1px;height:1px;background:#d4d4d4;opacity:0.6"></div>
<div class="a" style="left:17px;top:90px;width:13px;height:1px;background:#dcdcaa;opacity:0.6"></div>
<div class="a" style="left:30px;top:90px;width:1px;height:1px;background:#f2c01e;opacity:0.6"></div>
<div class="a" style="left:31px;top:90px;width:7px;height:1px;background:#e9a23b;opacity:0.6"></div>
<div class="a" style="left:38px;top:90px;width:1px;height:1px;background:#d4d4d4;opacity:0.6"></div>
<div class="a" style="left:39px;top:90px;width:15px;height:1px;background:#4ec9b0;opacity:0.6"></div>
<div class="a" style="left:54px;top:90px;width:1px;height:1px;background:#d4d4d4;opacity:0.6"></div>
<div class="a" style="left:55px;top:90px;width:4px;height:1px;background:#4ec9b0;opacity:0.6"></div>
<div class="a" style="left:59px;top:90px;width:1px;height:1px;background:#d4d4d4;opacity:0.6"></div>
<div class="a" style="left:61px;top:90px;width:4px;height:1px;background:#569cd6;opacity:0.6"></div>
<div class="a" style="left:65px;top:90px;width:1px;height:1px;background:#f2c01e;opacity:0.6"></div>
<div class="a" style="left:12px;top:90px;width:4px;height:2px;background:#e6c000"></div>
<div class="a" style="left:8px;top:92px;width:88px;height:2px;background:#7d6c0a"></div>
<div class="a" style="left:12px;top:92px;width:4px;height:1px;background:#e9a23b;opacity:0.6"></div>
<div class="a" style="left:16px;top:92px;width:1px;height:1px;background:#d4d4d4;opacity:0.6"></div>
<div class="a" style="left:17px;top:92px;width:19px;height:1px;background:#dcdcaa;opacity:0.6"></div>
<div class="a" style="left:36px;top:92px;width:1px;height:1px;background:#f2c01e;opacity:0.6"></div>
<div class="a" style="left:37px;top:92px;width:7px;height:1px;background:#e9a23b;opacity:0.6"></div>
<div class="a" style="left:44px;top:92px;width:1px;height:1px;background:#d4d4d4;opacity:0.6"></div>
<div class="a" style="left:45px;top:92px;width:15px;height:1px;background:#4ec9b0;opacity:0.6"></div>
<div class="a" style="left:60px;top:92px;width:1px;height:1px;background:#d4d4d4;opacity:0.6"></div>
<div class="a" style="left:61px;top:92px;width:4px;height:1px;background:#4ec9b0;opacity:0.6"></div>
<div class="a" style="left:65px;top:92px;width:1px;height:1px;background:#d4d4d4;opacity:0.6"></div>
<div class="a" style="left:67px;top:92px;width:4px;height:1px;background:#e9a23b;opacity:0.6"></div>
<div class="a" style="left:71px;top:92px;width:1px;height:1px;background:#d4d4d4;opacity:0.6"></div>
<div class="a" style="left:72px;top:92px;width:17px;height:1px;background:#4ec9b0;opacity:0.6"></div>
<div class="a" style="left:89px;top:92px;width:1px;height:1px;background:#f2c01e;opacity:0.6"></div>
<div class="a" style="left:12px;top:92px;width:4px;height:2px;background:#e6c000"></div>
<div class="a" style="left:67px;top:92px;width:4px;height:2px;background:#e6c000"></div>
<div class="a" style="left:8px;top:94px;width:88px;height:2px;background:#7d6c0a"></div>
<div class="a" style="left:12px;top:94px;width:4px;height:1px;background:#e9a23b;opacity:0.6"></div>
<div class="a" style="left:16px;top:94px;width:1px;height:1px;background:#d4d4d4;opacity:0.6"></div>
<div class="a" style="left:17px;top:94px;width:15px;height:1px;background:#dcdcaa;opacity:0.6"></div>
<div class="a" style="left:32px;top:94px;width:1px;height:1px;background:#f2c01e;opacity:0.6"></div>
<div class="a" style="left:33px;top:94px;width:7px;height:1px;background:#e9a23b;opacity:0.6"></div>
<div class="a" style="left:40px;top:94px;width:1px;height:1px;background:#d4d4d4;opacity:0.6"></div>
<div class="a" style="left:41px;top:94px;width:15px;height:1px;background:#4ec9b0;opacity:0.6"></div>
<div class="a" style="left:56px;top:94px;width:1px;height:1px;background:#d4d4d4;opacity:0.6"></div>
<div class="a" style="left:57px;top:94px;width:4px;height:1px;background:#4ec9b0;opacity:0.6"></div>
<div class="a" style="left:61px;top:94px;width:1px;height:1px;background:#d4d4d4;opacity:0.6"></div>
<div class="a" style="left:63px;top:94px;width:4px;height:1px;background:#e9a23b;opacity:0.6"></div>
<div class="a" style="left:67px;top:94px;width:1px;height:1px;background:#d4d4d4;opacity:0.6"></div>
<div class="a" style="left:68px;top:94px;width:16px;height:1px;background:#4ec9b0;opacity:0.6"></div>
<div class="a" style="left:84px;top:94px;width:1px;height:1px;background:#f2c01e;opacity:0.6"></div>
<div class="a" style="left:12px;top:94px;width:4px;height:2px;background:#e6c000"></div>
<div class="a" style="left:63px;top:94px;width:4px;height:2px;background:#e6c000"></div>
<div class="a" style="left:8px;top:96px;width:88px;height:2px;background:#7d6c0a"></div>
<div class="a" style="left:12px;top:96px;width:4px;height:1px;background:#e9a23b;opacity:0.6"></div>
<div class="a" style="left:16px;top:96px;width:1px;height:1px;background:#d4d4d4;opacity:0.6"></div>
<div class="a" style="left:17px;top:96px;width:14px;height:1px;background:#dcdcaa;opacity:0.6"></div>
<div class="a" style="left:31px;top:96px;width:1px;height:1px;background:#f2c01e;opacity:0.6"></div>
<div class="a" style="left:32px;top:96px;width:7px;height:1px;background:#e9a23b;opacity:0.6"></div>
<div class="a" style="left:39px;top:96px;width:1px;height:1px;background:#d4d4d4;opacity:0.6"></div>
<div class="a" style="left:40px;top:96px;width:15px;height:1px;background:#4ec9b0;opacity:0.6"></div>
<div class="a" style="left:55px;top:96px;width:1px;height:1px;background:#d4d4d4;opacity:0.6"></div>
<div class="a" style="left:56px;top:96px;width:4px;height:1px;background:#4ec9b0;opacity:0.6"></div>
<div class="a" style="left:60px;top:96px;width:1px;height:1px;background:#d4d4d4;opacity:0.6"></div>
<div class="a" style="left:62px;top:96px;width:6px;height:1px;background:#ce9178;opacity:0.6"></div>
<div class="a" style="left:69px;top:96px;width:5px;height:1px;background:#ce9178;opacity:0.6"></div>
<div class="a" style="left:74px;top:96px;width:1px;height:1px;background:#f2c01e;opacity:0.6"></div>
<div class="a" style="left:12px;top:96px;width:4px;height:2px;background:#e6c000"></div>
<div class="a" style="left:8px;top:98px;width:88px;height:2px;background:#7d6c0a"></div>
<div class="a" style="left:12px;top:98px;width:4px;height:1px;background:#e9a23b;opacity:0.6"></div>
<div class="a" style="left:16px;top:98px;width:1px;height:1px;background:#d4d4d4;opacity:0.6"></div>
<div class="a" style="left:17px;top:98px;width:9px;height:1px;background:#dcdcaa;opacity:0.6"></div>
<div class="a" style="left:26px;top:98px;width:1px;height:1px;background:#f2c01e;opacity:0.6"></div>
<div class="a" style="left:27px;top:98px;width:7px;height:1px;background:#e9a23b;opacity:0.6"></div>
<div class="a" style="left:34px;top:98px;width:1px;height:1px;background:#d4d4d4;opacity:0.6"></div>
<div class="a" style="left:35px;top:98px;width:15px;height:1px;background:#4ec9b0;opacity:0.6"></div>
<div class="a" style="left:50px;top:98px;width:1px;height:1px;background:#d4d4d4;opacity:0.6"></div>
<div class="a" style="left:51px;top:98px;width:4px;height:1px;background:#4ec9b0;opacity:0.6"></div>
<div class="a" style="left:55px;top:98px;width:1px;height:1px;background:#d4d4d4;opacity:0.6"></div>
<div class="a" style="left:57px;top:98px;width:7px;height:1px;background:#e9a23b;opacity:0.6"></div>
<div class="a" style="left:64px;top:98px;width:1px;height:1px;background:#d4d4d4;opacity:0.6"></div>
<div class="a" style="left:65px;top:98px;width:18px;height:1px;background:#4ec9b0;opacity:0.6"></div>
<div class="a" style="left:83px;top:98px;width:1px;height:1px;background:#d4d4d4;opacity:0.6"></div>
<div class="a" style="left:85px;top:98px;width:4px;height:1px;background:#e9a23b;opacity:0.6"></div>
<div class="a" style="left:89px;top:98px;width:1px;height:1px;background:#d4d4d4;opacity:0.6"></div>
<div class="a" style="left:90px;top:98px;width:17px;height:1px;background:#4ec9b0;opacity:0.6"></div>
<div class="a" style="left:12px;top:98px;width:4px;height:2px;background:#e6c000"></div>
<div class="a" style="left:85px;top:98px;width:4px;height:2px;background:#e6c000"></div>
<div class="a" style="left:8px;top:100px;width:88px;height:2px;background:#7d6c0a"></div>
<div class="a" style="left:12px;top:100px;width:4px;height:1px;background:#e9a23b;opacity:0.6"></div>
<div class="a" style="left:16px;top:100px;width:1px;height:1px;background:#d4d4d4;opacity:0.6"></div>
<div class="a" style="left:17px;top:100px;width:13px;height:1px;background:#dcdcaa;opacity:0.6"></div>
<div class="a" style="left:30px;top:100px;width:1px;height:1px;background:#f2c01e;opacity:0.6"></div>
<div class="a" style="left:31px;top:100px;width:7px;height:1px;background:#e9a23b;opacity:0.6"></div>
<div class="a" style="left:38px;top:100px;width:1px;height:1px;background:#d4d4d4;opacity:0.6"></div>
<div class="a" style="left:39px;top:100px;width:15px;height:1px;background:#4ec9b0;opacity:0.6"></div>
<div class="a" style="left:54px;top:100px;width:1px;height:1px;background:#d4d4d4;opacity:0.6"></div>
<div class="a" style="left:55px;top:100px;width:4px;height:1px;background:#4ec9b0;opacity:0.6"></div>
<div class="a" style="left:59px;top:100px;width:1px;height:1px;background:#d4d4d4;opacity:0.6"></div>
<div class="a" style="left:61px;top:100px;width:4px;height:1px;background:#e9a23b;opacity:0.6"></div>
<div class="a" style="left:65px;top:100px;width:1px;height:1px;background:#d4d4d4;opacity:0.6"></div>
<div class="a" style="left:66px;top:100px;width:15px;height:1px;background:#4ec9b0;opacity:0.6"></div>
<div class="a" style="left:81px;top:100px;width:1px;height:1px;background:#d4d4d4;opacity:0.6"></div>
<div class="a" style="left:83px;top:100px;width:23px;height:1px;background:#e9a23b;opacity:0.6"></div>
<div class="a" style="left:106px;top:100px;width:1px;height:1px;background:#f2c01e;opacity:0.6"></div>
<div class="a" style="left:12px;top:100px;width:4px;height:2px;background:#e6c000"></div>
<div class="a" style="left:61px;top:100px;width:4px;height:2px;background:#e6c000"></div>
<div class="a" style="left:8px;top:102px;width:3px;height:1px;background:#c586c0;opacity:0.6"></div>
<div class="a" style="left:8px;top:104px;width:7px;height:1px;background:#e9a23b;opacity:0.6"></div>
<div class="a" style="left:15px;top:104px;width:1px;height:1px;background:#d4d4d4;opacity:0.6"></div>
<div class="a" style="left:16px;top:104px;width:4px;height:1px;background:#dcdcaa;opacity:0.6"></div>
<div class="a" style="left:21px;top:104px;width:1px;height:1px;background:#d4d4d4;opacity:0.6"></div>
<div class="a" style="left:23px;top:104px;width:8px;height:1px;background:#c586c0;opacity:0.6"></div>
<div class="a" style="left:31px;top:104px;width:1px;height:1px;background:#f2c01e;opacity:0.6"></div>
<div class="a" style="left:32px;top:104px;width:1px;height:1px;background:#f2c01e;opacity:0.6"></div>
<div class="a" style="left:8px;top:106px;width:88px;height:2px;background:#7d6c0a"></div>
<div class="a" style="left:12px;top:106px;width:4px;height:1px;background:#e9a23b;opacity:0.6"></div>
<div class="a" style="left:16px;top:106px;width:1px;height:1px;background:#d4d4d4;opacity:0.6"></div>
<div class="a" style="left:17px;top:106px;width:7px;height:1px;background:#dcdcaa;opacity:0.6"></div>
<div class="a" style="left:24px;top:106px;width:1px;height:1px;background:#f2c01e;opacity:0.6"></div>
<div class="a" style="left:25px;top:106px;width:7px;height:1px;background:#e9a23b;opacity:0.6"></div>
<div class="a" style="left:32px;top:106px;width:1px;height:1px;background:#d4d4d4;opacity:0.6"></div>
<div class="a" style="left:33px;top:106px;width:18px;height:1px;background:#4ec9b0;opacity:0.6"></div>
<div class="a" style="left:51px;top:106px;width:1px;height:1px;background:#f2c01e;opacity:0.6"></div>
<div class="a" style="left:12px;top:106px;width:4px;height:2px;background:#e6c000"></div>
<div class="a" style="left:12px;top:108px;width:7px;height:1px;background:#e9a23b;opacity:0.6"></div>
<div class="a" style="left:19px;top:108px;width:1px;height:1px;background:#d4d4d4;opacity:0.6"></div>
<div class="a" style="left:20px;top:108px;width:18px;height:1px;background:#4ec9b0;opacity:0.6"></div>
<div class="a" style="left:39px;top:108px;width:1px;height:1px;background:#d4d4d4;opacity:0.6"></div>
<div class="a" style="left:41px;top:108px;width:3px;height:1px;background:#569cd6;opacity:0.6"></div>
<div class="a" style="left:8px;top:110px;width:3px;height:1px;background:#c586c0;opacity:0.6"></div>
<div class="a" style="left:8px;top:116px;width:76px;height:1px;background:#6a9955;opacity:0.6"></div>
<div class="a" style="left:40px;top:118px;width:4px;height:1px;background:#6a9955;opacity:0.6"></div>
<div class="a" style="left:45px;top:118px;width:2px;height:1px;background:#6a9955;opacity:0.6"></div>
<div class="a" style="left:48px;top:118px;width:3px;height:1px;background:#6a9955;opacity:0.6"></div>
<div class="a" style="left:52px;top:118px;width:6px;height:1px;background:#6a9955;opacity:0.6"></div>
<div class="a" style="left:59px;top:118px;width:2px;height:1px;background:#6a9955;opacity:0.6"></div>
<div class="a" style="left:62px;top:118px;width:7px;height:1px;background:#6a9955;opacity:0.6"></div>
<div class="a" style="left:8px;top:120px;width:76px;height:1px;background:#6a9955;opacity:0.6"></div>
<div class="a" style="left:8px;top:124px;width:8px;height:1px;background:#c586c0;opacity:0.6"></div>
<div class="a" style="left:17px;top:124px;width:11px;height:1px;background:#dcdcaa;opacity:0.6"></div>
<div class="a" style="left:28px;top:124px;width:1px;height:1px;background:#f2c01e;opacity:0.6"></div>
<div class="a" style="left:29px;top:124px;width:1px;height:1px;background:#f2c01e;opacity:0.6"></div>
<div class="a" style="left:12px;top:126px;width:7px;height:1px;background:#e9a23b;opacity:0.6"></div>
<div class="a" style="left:19px;top:126px;width:1px;height:1px;background:#d4d4d4;opacity:0.6"></div>
<div class="a" style="left:20px;top:126px;width:6px;height:1px;background:#dcdcaa;opacity:0.6"></div>
<div class="a" style="left:26px;top:126px;width:1px;height:1px;background:#f2c01e;opacity:0.6"></div>
<div class="a" style="left:27px;top:126px;width:1px;height:1px;background:#f2c01e;opacity:0.6"></div>
<div class="a" style="left:8px;top:128px;width:3px;height:1px;background:#c586c0;opacity:0.6"></div></div>
 <!-- scrollbar -->
 <div class="a" style="left:740px;top:22px;width:1px;height:755px;background:#161616"></div>
 <div class="a" style="left:836px;top:22px;width:1px;height:755px;background:#333"></div>
 <div class="a" style="left:837px;top:137px;width:10px;height:94px;background:#4d4d4d"></div>
 <div class="a" style="left:837px;top:233px;width:10px;height:194px;background:#3c3c3c"></div>
 <div class="a" style="left:837px;top:231px;width:10px;height:2px;background:#cfcfcf"></div>
 <div class="a" style="left:841px;top:87px;width:5px;height:7px;background:#b48ead"></div>
 <div class="a" style="left:841px;top:234px;width:5px;height:6px;background:#b48ead"></div>
 <div class="a" style="left:845px;top:276px;width:2px;height:22px;background:#cca700"></div>
 <div class="a" style="left:845px;top:312px;width:2px;height:13px;background:#cca700"></div>
 <div class="a" style="left:841px;top:340px;width:3px;height:52px;background:#8a8a8a"></div>
 <div class="a" style="left:845px;top:340px;width:2px;height:52px;background:#cca700"></div>
 <div class="a" style="left:845px;top:407px;width:2px;height:8px;background:#cca700"></div>
 <!-- hscroll -->
 <div class="a" style="left:67px;top:765px;width:428px;height:12px;background:rgba(121,121,121,0.4)"></div>
 <!-- hover popup -->
 <div class="a" style="left:136px;top:615px;width:279px;height:56px;background:#252526;border:1px solid #454545"></div>
 <div class="a" style="left:137px;top:643px;width:277px;height:1px;background:#454545"></div>
 <div class="a cl" style="left:145px;top:621px;color:#d4d4d4">global lvgl.<span style="color:#9cdcfe">obj_add_style</span>: <span style="color:#4ec9b0">unknown</span></div>
 <div class="a cl" style="left:145px;top:649px;color:#d4d4d4">any</div>
</div>
<div class="a" id="bottom"></div>
<!-- ANNOTATIONS -->
<div class="a anno" style="left:496px;top:133px">修改标签名称为</div>
<div class="a anno" style="left:496px;top:173px;letter-spacing:0.6px">LvglLabel1_test</div>
<div class="a anno" style="left:1423px;top:277px">所属屏幕为<span style="display:inline-block;width:28px;padding-left:8px">:</span>ScreenA</div>
<div class="a anno" style="left:840px;top:706px">自动生成的应用代码</div>
<div class="a rbox" style="left:803px;top:93px;width:247px;height:38px"></div>
<div class="a rbox" style="left:1161px;top:336px;width:253px;height:27px"></div>
<div class="a rbox" style="left:1139px;top:522px;width:674px;height:239px"></div>
<svg class="a" style="left:0;top:0" width="1917" height="846" viewBox="0 0 1917 846">
 <g fill="#ee1f2b">
  <path d="M727.2 156.4 L772.2 131.6 L770.8 137.2 L782.0 124.5 L765.4 127.7 L770.9 129.3 L726.8 155.6 Z"/>
  <path d="M1416.2 294.6 L1387.8 314.8 L1388.5 309.0 L1379.0 323.0 L1395.1 317.8 L1389.4 316.9 L1416.8 295.4 Z"/>
  <path d="M1033.2 699.4 L1107.9 662.1 L1106.3 667.7 L1118.0 655.5 L1101.3 657.9 L1106.7 659.8 L1032.8 698.6 Z"/>
 </g>
</svg>
</body></html>
